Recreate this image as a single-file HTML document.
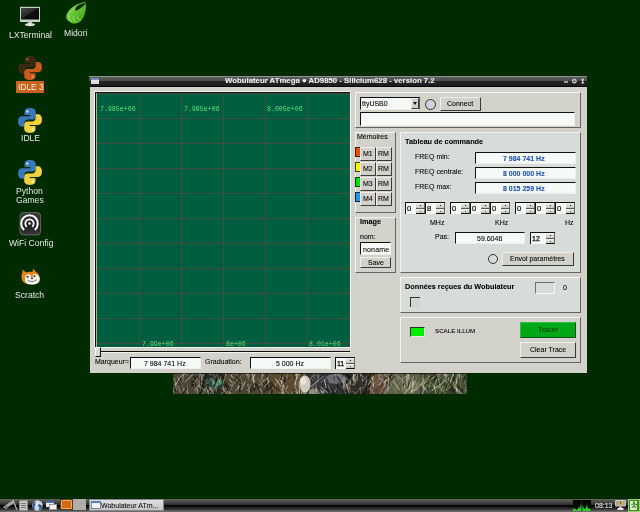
<!DOCTYPE html>
<html><head><meta charset="utf-8">
<style>
*{margin:0;padding:0;box-sizing:border-box}
html,body{width:640px;height:512px;overflow:hidden;background:#002a00;font-family:"Liberation Sans",sans-serif}
.a{position:absolute}
.t{position:absolute;white-space:pre;line-height:1;font-size:7px;color:#000;will-change:transform;-webkit-text-stroke-width:0.08px}
.b{font-weight:bold}
.fr{position:absolute;border-top:1px solid #f2f4f0;border-left:1px solid #f2f4f0;border-right:1px solid #62625e;border-bottom:1px solid #62625e}
.ent{position:absolute;background:#f6faf6;border-top:1px solid #111;border-left:1px solid #111;border-right:1px solid #eef0ee;border-bottom:1px solid #eef0ee}
.btn{position:absolute;background:#d2d2ca;border-top:1px solid #eeeee8;border-left:1px solid #eeeee8;border-right:1px solid #3a3a38;border-bottom:1px solid #3a3a38}
.dl{color:#e4e8e4;font-size:8.6px;-webkit-text-stroke-width:0}
.gl{position:absolute;background:#584a3c;opacity:0.75}
.cl{will-change:transform;position:absolute;white-space:pre;line-height:1;font-size:6.6px;font-family:"Liberation Mono",monospace;color:#58e07a}
.sp{position:absolute;width:20px;height:12px;background:#f6faf6;border-top:1px solid #111;border-left:1px solid #111}
.sb{position:absolute;right:0;width:9px;height:6px;background:linear-gradient(#f4f4f0,#c4c4bc);border-right:1px solid #6a6a66;border-bottom:1px solid #5a5a56}
.sb i{position:absolute;left:4px;top:2px;width:1px;height:1px;background:#111}
</style></head><body>

<!-- desktop icons -->
<svg class="a" style="left:19px;top:6px" width="22" height="21" viewBox="0 0 22 21">
<defs><linearGradient id="lg" x1="0" y1="0" x2="1" y2="1"><stop offset="0" stop-color="#4a4a4a"/><stop offset="0.45" stop-color="#2a2a2a"/><stop offset="0.5" stop-color="#101010"/><stop offset="1" stop-color="#060606"/></linearGradient></defs>
<rect x="1" y="0.8" width="20" height="15.2" fill="#c8d0c8"/>
<rect x="2" y="2" width="18" height="11.5" fill="url(#lg)"/>
<rect x="9" y="16" width="4" height="2" fill="#b8c0b8"/>
<ellipse cx="11" cy="18.6" rx="5" ry="1.7" fill="#d8e0d8"/>
</svg>
<svg class="a" style="left:62px;top:0px" width="28" height="26" viewBox="0 0 28 26">
<defs><linearGradient id="mg" x1="0" y1="0" x2="1" y2="1"><stop offset="0" stop-color="#a8e878"/><stop offset="0.5" stop-color="#62c030"/><stop offset="1" stop-color="#3a9a18"/></linearGradient></defs>
<path d="M23,2 C17,3 10,6 6,12 C3,16 4,20 8,22 C10,24 13,24 15,23 C17,23 19,21 21,18 C23,15 24,10 24,5 Z" fill="url(#mg)"/>
<path d="M23,4.5 C19.5,7.5 16.5,10 13.5,10.8 C12.5,9 14,6.5 17,4.8 C19,3.8 21,3.3 23,3 Z" fill="#002a00"/>
<path d="M7.5,15 C6.5,18 7.5,20.5 10,21.5 M11.5,16 C11,19 12,21.5 14.5,22 M15.5,16.5 C15.5,19 17,20.5 19,19.5" fill="none" stroke="#a8f078" stroke-width="0.9" opacity="0.8"/>
</svg>
<svg class="a" style="left:18px;top:56px" width="24" height="24" viewBox="0 0 24 24" preserveAspectRatio="none"><path d="M12,0 C7.5,0 6.5,2 6.5,4 L6.5,6.8 L12.3,6.8 L12.3,7.8 L4,7.8 C1.5,7.8 0,9.8 0,12.8 C0,16.2 1.5,18 4,18 L6.3,18 L6.3,14.6 C6.3,12.6 8,11 10,11 L14.6,11 C16.6,11 17.8,9.8 17.8,7.8 L17.8,4 C17.8,2 16.2,0 12,0 Z" fill="#3a2a14"/><path d="M12,24 C16.5,24 17.5,22 17.5,20 L17.5,17.2 L11.7,17.2 L11.7,16.2 L20,16.2 C22.5,16.2 24,14.2 24,11.2 C24,7.8 22.5,6 20,6 L17.7,6 L17.7,9.4 C17.7,11.4 16,13 14,13 L9.4,13 C7.4,13 6.2,14.2 6.2,16.2 L6.2,20 C6.2,22 7.8,24 12,24 Z" fill="#c85a1e"/><circle cx="9.3" cy="3.3" r="1.2" fill="#7a6040"/><circle cx="14.7" cy="20.7" r="1.2" fill="#e89050"/></svg>
<div class="a" style="left:16px;top:81px;width:28px;height:12px;background:#c8641e"></div><div class="t" style="left:17.5px;top:82.5px;font-size:8.6px;color:#f4e8d8;-webkit-text-stroke-width:0;letter-spacing:-0.1px">IDLE 3</div>
<svg class="a" style="left:18px;top:108px" width="24" height="25" viewBox="0 0 24 24" preserveAspectRatio="none"><path d="M12,0 C7.5,0 6.5,2 6.5,4 L6.5,6.8 L12.3,6.8 L12.3,7.8 L4,7.8 C1.5,7.8 0,9.8 0,12.8 C0,16.2 1.5,18 4,18 L6.3,18 L6.3,14.6 C6.3,12.6 8,11 10,11 L14.6,11 C16.6,11 17.8,9.8 17.8,7.8 L17.8,4 C17.8,2 16.2,0 12,0 Z" fill="#3a78b8"/><path d="M12,24 C16.5,24 17.5,22 17.5,20 L17.5,17.2 L11.7,17.2 L11.7,16.2 L20,16.2 C22.5,16.2 24,14.2 24,11.2 C24,7.8 22.5,6 20,6 L17.7,6 L17.7,9.4 C17.7,11.4 16,13 14,13 L9.4,13 C7.4,13 6.2,14.2 6.2,16.2 L6.2,20 C6.2,22 7.8,24 12,24 Z" fill="#f2d040"/><circle cx="9.3" cy="3.3" r="1.2" fill="#cfe0f0"/><circle cx="14.7" cy="20.7" r="1.2" fill="#fff8d0"/></svg>
<svg class="a" style="left:18px;top:160px" width="24" height="25" viewBox="0 0 24 24" preserveAspectRatio="none"><path d="M12,0 C7.5,0 6.5,2 6.5,4 L6.5,6.8 L12.3,6.8 L12.3,7.8 L4,7.8 C1.5,7.8 0,9.8 0,12.8 C0,16.2 1.5,18 4,18 L6.3,18 L6.3,14.6 C6.3,12.6 8,11 10,11 L14.6,11 C16.6,11 17.8,9.8 17.8,7.8 L17.8,4 C17.8,2 16.2,0 12,0 Z" fill="#3a78b8"/><path d="M12,24 C16.5,24 17.5,22 17.5,20 L17.5,17.2 L11.7,17.2 L11.7,16.2 L20,16.2 C22.5,16.2 24,14.2 24,11.2 C24,7.8 22.5,6 20,6 L17.7,6 L17.7,9.4 C17.7,11.4 16,13 14,13 L9.4,13 C7.4,13 6.2,14.2 6.2,16.2 L6.2,20 C6.2,22 7.8,24 12,24 Z" fill="#f2d040"/><circle cx="9.3" cy="3.3" r="1.2" fill="#cfe0f0"/><circle cx="14.7" cy="20.7" r="1.2" fill="#fff8d0"/></svg>
<svg class="a" style="left:19px;top:212px" width="23" height="24" viewBox="0 0 23 24">
<defs><linearGradient id="wg" x1="0" y1="0" x2="0" y2="1"><stop offset="0" stop-color="#3a3a3a"/><stop offset="0.6" stop-color="#1e1e1e"/><stop offset="1" stop-color="#3a3a3a"/></linearGradient></defs>
<rect x="1" y="0.6" width="20.6" height="22.4" rx="3.5" fill="url(#wg)" stroke="#7a7e7a" stroke-width="0.7"/>
<path d="M5.17,17.86 A8.3,8.3 0 1 1 15.83,17.86" fill="none" stroke="#f6f6f6" stroke-width="2.1"/>
<path d="M7.8,14.72 A4.2,4.2 0 1 1 13.2,14.72" fill="none" stroke="#f6f6f6" stroke-width="1.8"/>
<circle cx="10.5" cy="11.5" r="1.3" fill="#f6f6f6"/>
</svg>
<svg class="a" style="left:21px;top:268px" width="20" height="17" viewBox="0 0 20 17">
<path d="M1.5,1.5 L5,4.5 C7,3.5 10,3.5 11.5,4 L12,0.5 L15,4 C17,5 18.5,7 19,10 C19.5,13 17,16 12,16.5 C8,17 3,16 1,12 C0,9 0.5,6 1.5,4 Z" fill="#e8841c"/>
<path d="M4.5,8 C6,6 8,6 9.5,7 C11,6 14,5.5 16.5,7 C19,9 19.3,12.5 17.5,14.5 C15,16.8 10,17 6.5,15.8 C4,14.8 3.5,11 4.5,8 Z" fill="#f6f6f2"/>
<path d="M9,4 L12.5,4 L11.5,9.5 L10,9.5 Z" fill="#e8841c"/>
<circle cx="6.6" cy="8.8" r="1" fill="#222"/><circle cx="13.5" cy="8.3" r="1" fill="#222"/>
<ellipse cx="11" cy="10.3" rx="1.2" ry="0.9" fill="#6a2a10"/>
<path d="M6.5,12 Q11,15.5 16,11.5" fill="none" stroke="#556" stroke-width="0.8"/>
</svg>
<!-- desktop icon labels -->
<div class="t dl" style="left:9px;top:31px">LXTerminal</div>
<div class="t dl" style="left:64px;top:28.5px">Midori</div>
<div class="t dl" style="left:21px;top:133.5px">IDLE</div>
<div class="t dl" style="left:16px;top:186.5px">Python</div>
<div class="t dl" style="left:16px;top:195.5px">Games</div>
<div class="t dl" style="left:9px;top:239px">WiFi Config</div>
<div class="t dl" style="left:14.5px;top:290.5px">Scratch</div>

<!-- window frame -->
<div class="a" style="left:90px;top:76px;width:497px;height:297px;background:#d2d2ca"></div>
<div class="a" style="left:89px;top:76px;width:498px;height:11px;background:linear-gradient(#8e928e 0,#8e928e 1px,#5c5e5c 1px,#4a4c4a 5px,#242424 5px,#1e1e1e 10px,#000 10px)"></div>
<div class="a" style="left:91px;top:78px;width:8px;height:6px;background:linear-gradient(#5a78a8 0,#8aa0c4 2px,#e0e4e8 2px,#d4d8dc 6px)"></div>
<div class="t b" style="left:225px;top:77px;font-size:7.8px;color:#f0f0f0">Wobulateur ATmega ● AD9850 - Silicium628 - version 7.2</div>
<svg class="a" style="left:563px;top:78px" width="23" height="7" viewBox="0 0 23 7"><rect x="1" y="3" width="4" height="2" fill="#9a9a9a"/><circle cx="11.3" cy="3.2" r="2.4" fill="#c4c4c4"/><rect x="10" y="2.7" width="2.6" height="1.1" fill="#303030"/><path d="M18.2,0.8 L21.2,0.8 L20.2,3.2 L21.2,5.6 L18.2,5.6 L19.2,3.2 Z" fill="#d8d8d8"/></svg>

<!-- canvas -->
<div class="a" style="left:94px;top:91px;width:257px;height:257px;background:#eef2ee;border-top:1px solid #f0f2ee;border-left:1px solid #f0f2ee"></div>
<div class="a" style="left:95px;top:92px;width:255px;height:255px;background:#005e40;border-top:1px solid #101010;border-left:1px solid #101010;overflow:hidden">
</div>
<div class="gl" style="left:139px;top:93px;width:1px;height:254px"></div>
<div class="gl" style="left:181px;top:93px;width:1px;height:254px"></div>
<div class="gl" style="left:223px;top:93px;width:1px;height:254px"></div>
<div class="gl" style="left:265px;top:93px;width:1px;height:254px"></div>
<div class="gl" style="left:307px;top:93px;width:1px;height:254px"></div>
<div class="gl" style="left:349px;top:93px;width:1px;height:254px"></div>
<div class="gl" style="left:96px;top:93px;width:254px;height:1px"></div>
<div class="gl" style="left:96px;top:118px;width:254px;height:1px"></div>
<div class="gl" style="left:96px;top:143px;width:254px;height:1px"></div>
<div class="gl" style="left:96px;top:168px;width:254px;height:1px"></div>
<div class="gl" style="left:96px;top:193px;width:254px;height:1px"></div>
<div class="gl" style="left:96px;top:218px;width:254px;height:1px"></div>
<div class="gl" style="left:96px;top:243px;width:254px;height:1px"></div>
<div class="gl" style="left:96px;top:268px;width:254px;height:1px"></div>
<div class="gl" style="left:96px;top:293px;width:254px;height:1px"></div>
<div class="gl" style="left:96px;top:318px;width:254px;height:1px"></div>
<div class="gl" style="left:96px;top:343px;width:254px;height:1px"></div>
<div class="a" style="left:96px;top:93px;width:1px;height:254px;background:#a8b880"></div>
<div class="cl" style="left:100px;top:106.5px">7.985e+06</div>
<div class="cl" style="left:184px;top:106.5px">7.995e+06</div>
<div class="cl" style="left:267px;top:106.5px">8.005e+06</div>
<div class="a" style="left:96px;top:336px;width:254px;height:10px;overflow:hidden"><div class="cl" style="left:46px;top:6px">7.99e+06</div><div class="cl" style="left:130px;top:6px">8e+06</div><div class="cl" style="left:213px;top:6px">8.01e+06</div></div>

<!-- slider -->
<div class="a" style="left:100px;top:351px;width:250px;height:1px;background:#111"></div><div class="a" style="left:100px;top:352px;width:250px;height:1px;background:#f2f2ec"></div>
<div class="a" style="left:95px;top:347px;width:6px;height:10px;background:#d6d8d4;border-top:1px solid #fafafa;border-left:1px solid #fafafa;border-right:1px solid #111;border-bottom:1px solid #111"></div>

<!-- bottom row -->
<div class="t" style="left:95px;top:358px">Marqueur=</div>
<div class="ent" style="left:130px;top:357px;width:71px;height:12px"></div>
<div class="t" style="left:144px;top:359.5px">7 984 741 Hz</div>
<div class="t" style="left:205px;top:358px">Graduation:</div>
<div class="ent" style="left:250px;top:357px;width:81px;height:12px"></div>
<div class="t" style="left:276px;top:359.5px">5 000 Hz</div>
<div class="sp" style="left:335px;top:357px;width:20px;height:12px"><div class="sb" style="top:0"><i></i></div><div class="sb" style="top:6px;height:5px;border-bottom-color:#111"><i style="top:2px;background:#555"></i></div></div>
<div class="t" style="left:337px;top:359.5px;-webkit-text-stroke-width:0.25px">11</div>

<!-- frame connect -->
<div class="fr" style="left:355px;top:92px;width:226px;height:36px"></div>
<div class="ent" style="left:360px;top:97px;width:60px;height:13px;border-right:1px solid #555;border-bottom:1px solid #e8ece8"></div>
<div class="t" style="left:362px;top:99.5px">ttyUSB0</div>
<div class="btn" style="left:411px;top:98px;width:8px;height:11px"></div>
<div class="a" style="left:413px;top:102px;width:0;height:0;border-left:2px solid transparent;border-right:2px solid transparent;border-top:3px solid #111"></div>
<div class="a" style="left:425px;top:99px;width:11px;height:11px;border:1px solid #333;border-radius:50%;background:#d0d2d8"></div>
<div class="btn" style="left:440px;top:97px;width:41px;height:14px"></div>
<div class="t" style="left:447px;top:100px">Connect</div>
<div class="ent" style="left:360px;top:112px;width:215px;height:14px"></div>

<!-- frame memoires -->
<div class="fr" style="left:355px;top:132px;width:41px;height:81px"></div>
<div class="t" style="left:357px;top:133px">Mémoires</div>
<div class="a" style="left:355px;top:147px;width:6px;height:10px;background:#f05010;border:1px solid #402010"></div>
<div class="a" style="left:355px;top:162px;width:6px;height:10px;background:#f8f800;border:1px solid #404010"></div>
<div class="a" style="left:355px;top:177px;width:6px;height:10px;background:#00e000;border:1px solid #104010"></div>
<div class="a" style="left:355px;top:192px;width:6px;height:10px;background:#2098f0;border:1px solid #102040"></div>
<div class="btn" style="left:360px;top:147px;width:16px;height:14px"></div><div class="t" style="left:363px;top:150px">M1</div>
<div class="btn" style="left:376px;top:147px;width:16px;height:14px"></div><div class="t" style="left:378px;top:150px">RM</div>
<div class="btn" style="left:360px;top:162px;width:16px;height:14px"></div><div class="t" style="left:363px;top:165px">M2</div>
<div class="btn" style="left:376px;top:162px;width:16px;height:14px"></div><div class="t" style="left:378px;top:165px">RM</div>
<div class="btn" style="left:360px;top:177px;width:16px;height:14px"></div><div class="t" style="left:363px;top:180px">M3</div>
<div class="btn" style="left:376px;top:177px;width:16px;height:14px"></div><div class="t" style="left:378px;top:180px">RM</div>
<div class="btn" style="left:360px;top:192px;width:16px;height:14px"></div><div class="t" style="left:363px;top:195px">M4</div>
<div class="btn" style="left:376px;top:192px;width:16px;height:14px"></div><div class="t" style="left:378px;top:195px">RM</div>

<!-- frame image -->
<div class="fr" style="left:355px;top:217px;width:41px;height:56px"></div>
<div class="t b" style="left:360px;top:218px;font-size:7.3px">Image</div>
<div class="t" style="left:360px;top:233.2px">nom:</div>
<div class="ent" style="left:360px;top:242px;width:31px;height:13px"></div>
<div class="t" style="left:362.5px;top:245.5px;letter-spacing:0.15px">noname</div>
<div class="btn" style="left:360px;top:257px;width:31px;height:11px"></div>
<div class="t" style="left:368px;top:258.5px">Save</div>

<!-- frame tableau -->
<div class="fr" style="left:400px;top:132px;width:181px;height:141px;background:#d8dcd8"></div>
<div class="t b" style="left:405px;top:138px;font-size:7.3px">Tableau de commande</div>
<div class="t" style="left:415px;top:153px">FREQ min:</div>
<div class="t" style="left:415px;top:168px">FREQ centrale:</div>
<div class="t" style="left:415px;top:183px">FREQ max:</div>
<div class="ent" style="left:475px;top:152px;width:101px;height:12px"></div>
<div class="ent" style="left:475px;top:167px;width:101px;height:12px"></div>
<div class="ent" style="left:475px;top:182px;width:101px;height:12px"></div>
<div class="t b" style="left:503px;top:155px;color:#1c50b4">7 984 741 Hz</div>
<div class="t b" style="left:503px;top:170px;color:#1c50b4">8 000 000 Hz</div>
<div class="t b" style="left:503px;top:185px;color:#1c50b4">8 015 259 Hz</div>
<div class="sp" style="left:405px;top:202px"><div class="sb" style="top:0"><i></i></div><div class="sb" style="top:6px;height:5px;border-bottom-color:#111"><i style="top:2px;background:#555"></i></div></div>
<div class="sp" style="left:425px;top:202px"><div class="sb" style="top:0"><i></i></div><div class="sb" style="top:6px;height:5px;border-bottom-color:#111"><i style="top:2px;background:#555"></i></div></div>
<div class="sp" style="left:450px;top:202px"><div class="sb" style="top:0"><i></i></div><div class="sb" style="top:6px;height:5px;border-bottom-color:#111"><i style="top:2px;background:#555"></i></div></div>
<div class="sp" style="left:470px;top:202px"><div class="sb" style="top:0"><i></i></div><div class="sb" style="top:6px;height:5px;border-bottom-color:#111"><i style="top:2px;background:#555"></i></div></div>
<div class="sp" style="left:490px;top:202px"><div class="sb" style="top:0"><i></i></div><div class="sb" style="top:6px;height:5px;border-bottom-color:#111"><i style="top:2px;background:#555"></i></div></div>
<div class="sp" style="left:515px;top:202px"><div class="sb" style="top:0"><i></i></div><div class="sb" style="top:6px;height:5px;border-bottom-color:#111"><i style="top:2px;background:#555"></i></div></div>
<div class="sp" style="left:535px;top:202px"><div class="sb" style="top:0"><i></i></div><div class="sb" style="top:6px;height:5px;border-bottom-color:#111"><i style="top:2px;background:#555"></i></div></div>
<div class="sp" style="left:555px;top:202px"><div class="sb" style="top:0"><i></i></div><div class="sb" style="top:6px;height:5px;border-bottom-color:#111"><i style="top:2px;background:#555"></i></div></div>
<div class="t" style="left:407px;top:204.6px;font-size:7.6px;-webkit-text-stroke-width:0.2px">0</div>
<div class="t" style="left:427px;top:204.6px;font-size:7.6px;-webkit-text-stroke-width:0.2px">8</div>
<div class="t" style="left:452px;top:204.6px;font-size:7.6px;-webkit-text-stroke-width:0.2px">0</div>
<div class="t" style="left:472px;top:204.6px;font-size:7.6px;-webkit-text-stroke-width:0.2px">0</div>
<div class="t" style="left:492px;top:204.6px;font-size:7.6px;-webkit-text-stroke-width:0.2px">0</div>
<div class="t" style="left:517px;top:204.6px;font-size:7.6px;-webkit-text-stroke-width:0.2px">0</div>
<div class="t" style="left:537px;top:204.6px;font-size:7.6px;-webkit-text-stroke-width:0.2px">0</div>
<div class="t" style="left:557px;top:204.6px;font-size:7.6px;-webkit-text-stroke-width:0.2px">0</div>
<div class="t" style="left:430px;top:219px">MHz</div>
<div class="t" style="left:495px;top:219px">KHz</div>
<div class="t" style="left:565px;top:219px">Hz</div>
<div class="t" style="left:435px;top:233px">Pas:</div>
<div class="ent" style="left:455px;top:232px;width:70px;height:12px"></div>
<div class="t" style="left:477px;top:235px">59.6046</div>
<div class="sp" style="left:530px;top:232px;width:25px;height:12px"><div class="sb" style="top:0"><i></i></div><div class="sb" style="top:6px;height:5px;border-bottom-color:#111"><i style="top:2px;background:#555"></i></div></div>
<div class="t" style="left:532px;top:235px;-webkit-text-stroke-width:0.25px">12</div>
<div class="a" style="left:488px;top:254px;width:10px;height:10px;border:1px solid #333;border-radius:50%"></div>
<div class="btn" style="left:502px;top:252px;width:72px;height:14px"></div>
<div class="t" style="left:510px;top:255px">Envoi paramètres</div>

<!-- frame donnees -->
<div class="fr" style="left:400px;top:277px;width:181px;height:36px;background:#d8dcd8"></div>
<div class="t b" style="left:405px;top:283px;font-size:7.3px">Données reçues du Wobulateur</div>
<div class="a" style="left:410px;top:297px;width:10px;height:10px;background:#d2d4d2;border-top:1px solid #333;border-left:1px solid #333"></div>
<div class="a" style="left:535px;top:282px;width:20px;height:12px;border-top:1px solid #707070;border-left:1px solid #707070;border-right:1px solid #f8f8f8;border-bottom:1px solid #f8f8f8"></div>
<div class="t" style="left:563px;top:284px">0</div>

<!-- frame trace -->
<div class="fr" style="left:400px;top:317px;width:181px;height:46px"></div>
<div class="a" style="left:410px;top:327px;width:15px;height:10px;background:#00ee00;border-top:1px solid #1a3a1a;border-left:1px solid #1a3a1a;border-right:1px solid #e0f0e0;border-bottom:1px solid #e0f0e0"></div>
<div class="t" style="left:435px;top:328px;font-size:6.2px">SCALE ILLUM</div>
<div class="a" style="left:520px;top:322px;width:56px;height:16px;background:#00a818;border-top:1px solid #30c040;border-left:1px solid #30c040;border-right:1px solid #105010;border-bottom:1px solid #105010"></div>
<div class="t" style="left:538px;top:326px;color:#0a3a0a">Tracer</div>
<div class="btn" style="left:520px;top:342px;width:56px;height:16px"></div>
<div class="t" style="left:530px;top:346px">Clear Trace</div>

<!-- photo strip -->
<svg class="a" style="left:173px;top:373px" width="294" height="21" viewBox="0 0 294 21"><rect width="294" height="21" fill="#3a3526"/><rect x="0" y="0" width="27" height="21" fill="#4a4636"/><rect x="27" y="0" width="25" height="21" fill="#2a2c24"/><rect x="52" y="0" width="45" height="21" fill="#4e4634"/><rect x="97" y="0" width="30" height="21" fill="#5a4a30"/><rect x="137" y="0" width="35" height="21" fill="#34363c"/><rect x="172" y="0" width="25" height="21" fill="#302e28"/><rect x="197" y="0" width="15" height="21" fill="#5a4636"/><rect x="212" y="0" width="35" height="21" fill="#5e5c4a"/><rect x="247" y="0" width="47" height="21" fill="#3c4232"/><ellipse cx="40" cy="10" rx="9" ry="6" fill="#24443a"/><ellipse cx="44" cy="9" rx="5" ry="3.5" fill="#4a8a70"/><ellipse cx="163" cy="6" rx="11" ry="5" fill="#6a6a72"/><ellipse cx="206" cy="7" rx="10" ry="6" fill="#6a5444"/><ellipse cx="140" cy="19" rx="12" ry="3" fill="#8a8a88"/><line x1="45.1" y1="23.1" x2="51.7" y2="18.1" stroke="#c8c8c0" stroke-width="0.92" opacity="0.63"/><line x1="50.8" y1="18.0" x2="50.2" y2="12.9" stroke="#e0d8c0" stroke-width="0.97" opacity="0.51"/><line x1="275.1" y1="7.9" x2="275.9" y2="4.0" stroke="#b0a080" stroke-width="0.87" opacity="0.95"/><line x1="146.3" y1="0.5" x2="138.6" y2="-7.2" stroke="#1a160e" stroke-width="1.54" opacity="0.51"/><line x1="44.0" y1="5.6" x2="35.0" y2="-1.9" stroke="#b0a080" stroke-width="0.59" opacity="0.72"/><line x1="232.2" y1="2.9" x2="233.6" y2="-7.6" stroke="#242018" stroke-width="1.56" opacity="0.80"/><line x1="139.8" y1="22.9" x2="140.2" y2="16.2" stroke="#c8c0a0" stroke-width="0.57" opacity="0.65"/><line x1="147.4" y1="23.8" x2="140.4" y2="16.6" stroke="#1a160e" stroke-width="0.83" opacity="0.65"/><line x1="145.8" y1="23.5" x2="146.6" y2="16.8" stroke="#a09070" stroke-width="0.76" opacity="0.77"/><line x1="29.3" y1="7.4" x2="26.9" y2="-1.3" stroke="#c8c8c0" stroke-width="0.96" opacity="0.66"/><line x1="26.4" y1="21.6" x2="29.4" y2="12.5" stroke="#0e0c08" stroke-width="1.17" opacity="0.81"/><line x1="286.3" y1="5.9" x2="286.2" y2="-1.8" stroke="#c8c0a0" stroke-width="0.80" opacity="0.93"/><line x1="261.3" y1="6.9" x2="263.0" y2="3.3" stroke="#0e0c08" stroke-width="1.21" opacity="0.68"/><line x1="254.4" y1="3.6" x2="255.6" y2="-1.1" stroke="#4a8038" stroke-width="0.59" opacity="0.69"/><line x1="216.5" y1="5.1" x2="218.0" y2="1.7" stroke="#0e0c08" stroke-width="1.33" opacity="0.88"/><line x1="249.8" y1="12.8" x2="253.6" y2="7.9" stroke="#f0e8d8" stroke-width="0.71" opacity="0.77"/><line x1="78.9" y1="7.8" x2="81.1" y2="2.4" stroke="#e0d8c0" stroke-width="0.56" opacity="0.67"/><line x1="70.9" y1="3.2" x2="80.2" y2="-4.6" stroke="#b0a080" stroke-width="0.70" opacity="0.62"/><line x1="23.8" y1="6.8" x2="20.4" y2="3.5" stroke="#0e0c08" stroke-width="1.59" opacity="0.76"/><line x1="87.4" y1="9.1" x2="84.4" y2="4.9" stroke="#b0a080" stroke-width="0.61" opacity="0.72"/><line x1="210.8" y1="22.3" x2="212.6" y2="18.7" stroke="#e0d8c0" stroke-width="0.75" opacity="0.77"/><line x1="112.8" y1="16.7" x2="115.0" y2="11.4" stroke="#b0a080" stroke-width="0.59" opacity="0.84"/><line x1="90.3" y1="19.3" x2="99.5" y2="12.4" stroke="#1a160e" stroke-width="1.53" opacity="0.56"/><line x1="144.0" y1="7.4" x2="148.9" y2="-3.4" stroke="#a09070" stroke-width="0.75" opacity="0.77"/><line x1="207.6" y1="1.6" x2="206.0" y2="-3.5" stroke="#a09070" stroke-width="0.81" opacity="0.59"/><line x1="195.0" y1="12.1" x2="201.5" y2="2.1" stroke="#e0d8c0" stroke-width="0.81" opacity="0.79"/><line x1="282.9" y1="15.9" x2="280.1" y2="13.2" stroke="#4a8038" stroke-width="0.76" opacity="0.70"/><line x1="7.8" y1="9.2" x2="7.3" y2="3.1" stroke="#242018" stroke-width="1.52" opacity="0.83"/><line x1="143.0" y1="21.4" x2="142.8" y2="10.3" stroke="#c8c8c0" stroke-width="0.74" opacity="0.54"/><line x1="232.0" y1="22.0" x2="233.8" y2="16.6" stroke="#a09070" stroke-width="0.93" opacity="0.80"/><line x1="112.3" y1="7.5" x2="106.9" y2="3.5" stroke="#a09070" stroke-width="0.99" opacity="0.93"/><line x1="113.9" y1="17.8" x2="115.4" y2="10.9" stroke="#242018" stroke-width="1.32" opacity="0.57"/><line x1="293.8" y1="2.0" x2="294.6" y2="-3.5" stroke="#98c068" stroke-width="0.60" opacity="0.82"/><line x1="3.7" y1="17.2" x2="-0.7" y2="8.8" stroke="#c8c0a0" stroke-width="0.75" opacity="0.90"/><line x1="42.8" y1="9.2" x2="40.8" y2="4.6" stroke="#b0a080" stroke-width="0.81" opacity="0.70"/><line x1="77.8" y1="0.5" x2="85.2" y2="-6.4" stroke="#0e0c08" stroke-width="1.61" opacity="0.51"/><line x1="147.4" y1="3.5" x2="157.5" y2="-4.1" stroke="#242018" stroke-width="1.25" opacity="0.68"/><line x1="290.7" y1="19.7" x2="284.0" y2="11.6" stroke="#1a160e" stroke-width="1.17" opacity="0.86"/><line x1="155.9" y1="19.8" x2="152.1" y2="12.2" stroke="#0e0c08" stroke-width="1.68" opacity="0.67"/><line x1="172.7" y1="23.7" x2="171.5" y2="12.1" stroke="#e0d8c0" stroke-width="0.54" opacity="0.80"/><line x1="195.1" y1="19.2" x2="196.7" y2="11.4" stroke="#1a160e" stroke-width="1.41" opacity="0.83"/><line x1="97.8" y1="16.0" x2="88.6" y2="9.2" stroke="#1a160e" stroke-width="1.44" opacity="0.62"/><line x1="51.6" y1="6.6" x2="46.5" y2="-0.3" stroke="#0e0c08" stroke-width="1.15" opacity="0.64"/><line x1="234.9" y1="17.5" x2="233.4" y2="7.4" stroke="#e0d8c0" stroke-width="0.97" opacity="0.55"/><line x1="154.5" y1="15.1" x2="152.4" y2="7.0" stroke="#0e0c08" stroke-width="0.84" opacity="0.59"/><line x1="47.9" y1="6.7" x2="47.5" y2="2.7" stroke="#b0a080" stroke-width="0.93" opacity="0.72"/><line x1="11.9" y1="9.4" x2="20.5" y2="0.6" stroke="#c8c8c0" stroke-width="0.77" opacity="0.91"/><line x1="281.3" y1="15.5" x2="283.2" y2="5.1" stroke="#f0e8d8" stroke-width="0.68" opacity="0.51"/><line x1="44.1" y1="6.9" x2="40.2" y2="-0.1" stroke="#a09070" stroke-width="0.71" opacity="0.73"/><line x1="131.8" y1="16.1" x2="132.9" y2="9.3" stroke="#f0e8d8" stroke-width="0.62" opacity="0.91"/><line x1="258.4" y1="17.8" x2="266.9" y2="11.3" stroke="#e0d8c0" stroke-width="0.98" opacity="0.91"/><line x1="59.7" y1="10.2" x2="55.9" y2="5.9" stroke="#f0e8d8" stroke-width="0.76" opacity="0.90"/><line x1="189.8" y1="11.7" x2="189.0" y2="4.4" stroke="#c8c0a0" stroke-width="0.63" opacity="0.79"/><line x1="75.7" y1="7.2" x2="73.6" y2="0.1" stroke="#b0a080" stroke-width="0.89" opacity="0.59"/><line x1="37.4" y1="14.0" x2="29.2" y2="8.0" stroke="#0e0c08" stroke-width="1.19" opacity="0.65"/><line x1="170.2" y1="16.1" x2="171.2" y2="5.0" stroke="#c8c0a0" stroke-width="0.93" opacity="0.72"/><line x1="3.2" y1="14.4" x2="1.5" y2="5.1" stroke="#c8c0a0" stroke-width="0.73" opacity="0.72"/><line x1="205.7" y1="22.3" x2="210.9" y2="13.3" stroke="#e0d8c0" stroke-width="0.63" opacity="0.67"/><line x1="55.4" y1="22.4" x2="48.9" y2="14.7" stroke="#e0d8c0" stroke-width="0.62" opacity="0.84"/><line x1="26.7" y1="5.2" x2="26.6" y2="-5.9" stroke="#c8c8c0" stroke-width="0.60" opacity="0.60"/><line x1="203.7" y1="6.3" x2="207.3" y2="1.5" stroke="#242018" stroke-width="0.81" opacity="0.71"/><line x1="245.8" y1="10.7" x2="249.2" y2="2.7" stroke="#242018" stroke-width="0.82" opacity="0.76"/><line x1="147.2" y1="9.6" x2="151.0" y2="6.4" stroke="#f0e8d8" stroke-width="0.51" opacity="0.69"/><line x1="129.9" y1="15.4" x2="131.8" y2="12.3" stroke="#c8c8c0" stroke-width="0.61" opacity="0.73"/><line x1="133.3" y1="0.3" x2="132.0" y2="-4.5" stroke="#242018" stroke-width="1.55" opacity="0.86"/><line x1="77.4" y1="15.0" x2="74.8" y2="11.0" stroke="#f0e8d8" stroke-width="0.52" opacity="0.60"/><line x1="252.6" y1="16.8" x2="249.5" y2="13.3" stroke="#e0d8c0" stroke-width="0.82" opacity="0.58"/><line x1="58.3" y1="18.9" x2="55.0" y2="12.5" stroke="#0e0c08" stroke-width="1.37" opacity="0.59"/><line x1="277.3" y1="10.0" x2="281.0" y2="-0.7" stroke="#e0d8c0" stroke-width="0.98" opacity="0.68"/><line x1="170.4" y1="1.9" x2="163.9" y2="-7.6" stroke="#1a160e" stroke-width="1.38" opacity="0.81"/><line x1="288.3" y1="9.3" x2="290.9" y2="0.3" stroke="#4a8038" stroke-width="0.91" opacity="0.62"/><line x1="238.6" y1="17.3" x2="241.2" y2="13.4" stroke="#1a160e" stroke-width="1.29" opacity="0.73"/><line x1="89.8" y1="20.8" x2="86.6" y2="14.9" stroke="#f0e8d8" stroke-width="0.72" opacity="0.80"/><line x1="124.2" y1="1.1" x2="130.9" y2="-6.3" stroke="#c8c8c0" stroke-width="0.61" opacity="0.94"/><line x1="185.3" y1="0.8" x2="184.7" y2="-4.8" stroke="#b0a080" stroke-width="0.96" opacity="0.58"/><line x1="60.1" y1="6.0" x2="67.5" y2="-3.5" stroke="#f0e8d8" stroke-width="0.89" opacity="0.51"/><line x1="102.8" y1="11.5" x2="108.4" y2="3.8" stroke="#c8c0a0" stroke-width="0.80" opacity="0.63"/><line x1="94.9" y1="23.1" x2="99.4" y2="15.0" stroke="#c8c8c0" stroke-width="0.84" opacity="0.57"/><line x1="262.2" y1="15.0" x2="258.1" y2="9.4" stroke="#f0e8d8" stroke-width="0.69" opacity="0.65"/><line x1="78.0" y1="5.0" x2="75.5" y2="2.2" stroke="#242018" stroke-width="1.03" opacity="0.81"/><line x1="109.6" y1="10.3" x2="117.2" y2="4.1" stroke="#242018" stroke-width="1.31" opacity="0.78"/><line x1="196.9" y1="4.0" x2="200.7" y2="-5.4" stroke="#0e0c08" stroke-width="0.85" opacity="0.71"/><line x1="28.7" y1="10.7" x2="28.8" y2="3.8" stroke="#e0d8c0" stroke-width="0.56" opacity="0.79"/><line x1="211.4" y1="9.8" x2="210.0" y2="6.6" stroke="#b0a080" stroke-width="0.78" opacity="0.93"/><line x1="235.7" y1="8.3" x2="238.6" y2="4.6" stroke="#b0a080" stroke-width="0.66" opacity="0.78"/><line x1="279.6" y1="1.0" x2="272.5" y2="-8.6" stroke="#c8c8c0" stroke-width="0.55" opacity="0.57"/><line x1="234.9" y1="3.1" x2="236.7" y2="-2.2" stroke="#98c068" stroke-width="0.90" opacity="0.51"/><line x1="93.0" y1="6.1" x2="97.7" y2="1.7" stroke="#a09070" stroke-width="0.55" opacity="0.84"/><line x1="60.8" y1="7.3" x2="58.0" y2="1.7" stroke="#f0e8d8" stroke-width="0.86" opacity="0.84"/><line x1="126.7" y1="22.4" x2="126.1" y2="11.6" stroke="#e0d8c0" stroke-width="0.95" opacity="0.78"/><line x1="50.7" y1="17.2" x2="53.8" y2="14.1" stroke="#b0a080" stroke-width="0.94" opacity="0.94"/><line x1="142.9" y1="18.4" x2="143.6" y2="14.7" stroke="#c8c0a0" stroke-width="0.95" opacity="0.87"/><line x1="295.3" y1="23.6" x2="290.2" y2="18.4" stroke="#4a8038" stroke-width="0.81" opacity="0.79"/><line x1="257.5" y1="3.4" x2="253.4" y2="-7.5" stroke="#6a9848" stroke-width="0.59" opacity="0.84"/><line x1="274.2" y1="1.2" x2="268.7" y2="-5.0" stroke="#a09070" stroke-width="0.68" opacity="0.62"/><line x1="19.0" y1="13.2" x2="19.1" y2="6.9" stroke="#0e0c08" stroke-width="1.27" opacity="0.68"/><line x1="80.0" y1="18.1" x2="83.5" y2="10.7" stroke="#242018" stroke-width="1.42" opacity="0.63"/><line x1="187.4" y1="4.0" x2="188.2" y2="-9.1" stroke="#f0e8d8" stroke-width="0.59" opacity="0.59"/><line x1="281.9" y1="20.8" x2="279.4" y2="15.7" stroke="#1a160e" stroke-width="1.34" opacity="0.67"/><line x1="190.6" y1="4.1" x2="181.2" y2="-4.5" stroke="#e0d8c0" stroke-width="0.78" opacity="0.88"/><line x1="-1.6" y1="10.1" x2="-5.0" y2="3.7" stroke="#a09070" stroke-width="0.89" opacity="0.94"/><line x1="202.9" y1="23.2" x2="197.6" y2="15.1" stroke="#f0e8d8" stroke-width="0.59" opacity="0.78"/><line x1="122.0" y1="11.8" x2="124.5" y2="0.7" stroke="#c8c8c0" stroke-width="0.97" opacity="0.95"/><line x1="173.3" y1="12.3" x2="179.9" y2="6.8" stroke="#e0d8c0" stroke-width="0.63" opacity="0.80"/><line x1="75.2" y1="4.1" x2="78.3" y2="-7.2" stroke="#0e0c08" stroke-width="0.90" opacity="0.85"/><line x1="171.7" y1="20.4" x2="163.0" y2="11.7" stroke="#242018" stroke-width="1.47" opacity="0.79"/><line x1="141.2" y1="18.9" x2="139.9" y2="12.6" stroke="#a09070" stroke-width="0.98" opacity="0.58"/><line x1="293.4" y1="9.2" x2="287.1" y2="0.7" stroke="#242018" stroke-width="1.43" opacity="0.65"/><line x1="30.9" y1="2.8" x2="26.5" y2="-2.1" stroke="#c8c8c0" stroke-width="0.59" opacity="0.73"/><line x1="110.9" y1="22.0" x2="106.6" y2="12.3" stroke="#a09070" stroke-width="0.87" opacity="0.68"/><line x1="11.4" y1="20.2" x2="11.5" y2="15.4" stroke="#a09070" stroke-width="0.57" opacity="0.76"/><line x1="133.7" y1="9.9" x2="140.8" y2="1.9" stroke="#b0a080" stroke-width="0.88" opacity="0.87"/><line x1="190.9" y1="19.1" x2="190.6" y2="12.5" stroke="#242018" stroke-width="1.07" opacity="0.78"/><line x1="124.7" y1="21.7" x2="121.4" y2="10.1" stroke="#c8c8c0" stroke-width="0.69" opacity="0.85"/><line x1="52.7" y1="2.2" x2="51.5" y2="-10.8" stroke="#f0e8d8" stroke-width="0.64" opacity="0.84"/><line x1="78.3" y1="7.9" x2="84.5" y2="-2.3" stroke="#b0a080" stroke-width="0.73" opacity="0.93"/><line x1="64.2" y1="9.7" x2="59.1" y2="4.9" stroke="#0e0c08" stroke-width="1.55" opacity="0.57"/><line x1="161.8" y1="19.3" x2="163.9" y2="15.0" stroke="#b0a080" stroke-width="0.95" opacity="0.72"/><line x1="116.3" y1="0.4" x2="111.3" y2="-8.8" stroke="#b0a080" stroke-width="0.90" opacity="0.59"/><line x1="192.1" y1="22.3" x2="195.6" y2="14.6" stroke="#1a160e" stroke-width="1.40" opacity="0.74"/><line x1="80.5" y1="18.1" x2="82.3" y2="14.8" stroke="#242018" stroke-width="1.68" opacity="0.87"/><line x1="253.6" y1="0.5" x2="256.1" y2="-4.8" stroke="#b0a080" stroke-width="0.53" opacity="0.69"/><line x1="266.9" y1="17.0" x2="263.8" y2="7.8" stroke="#1a160e" stroke-width="1.39" opacity="0.72"/><line x1="271.7" y1="3.2" x2="268.3" y2="-6.1" stroke="#4a8038" stroke-width="0.84" opacity="0.87"/><line x1="176.6" y1="5.4" x2="171.3" y2="-1.7" stroke="#0e0c08" stroke-width="1.31" opacity="0.83"/><line x1="2.7" y1="11.4" x2="6.0" y2="5.8" stroke="#1a160e" stroke-width="1.58" opacity="0.78"/><line x1="233.3" y1="3.8" x2="234.9" y2="-1.5" stroke="#98c068" stroke-width="0.87" opacity="0.94"/><line x1="140.0" y1="23.5" x2="136.8" y2="21.2" stroke="#c8c8c0" stroke-width="0.79" opacity="0.68"/><line x1="280.7" y1="5.4" x2="283.1" y2="-3.9" stroke="#0e0c08" stroke-width="0.84" opacity="0.60"/><line x1="275.2" y1="15.5" x2="271.5" y2="12.3" stroke="#c8c0a0" stroke-width="0.68" opacity="0.59"/><line x1="80.9" y1="4.4" x2="75.4" y2="-4.6" stroke="#f0e8d8" stroke-width="0.69" opacity="0.63"/><line x1="252.7" y1="9.8" x2="254.7" y2="1.2" stroke="#4a8038" stroke-width="0.89" opacity="0.51"/><line x1="191.4" y1="11.1" x2="188.3" y2="8.4" stroke="#0e0c08" stroke-width="1.54" opacity="0.72"/><line x1="145.0" y1="5.5" x2="143.9" y2="-4.8" stroke="#a09070" stroke-width="0.98" opacity="0.57"/><line x1="156.2" y1="10.2" x2="165.7" y2="1.8" stroke="#a09070" stroke-width="0.74" opacity="0.52"/><line x1="75.7" y1="4.5" x2="72.0" y2="-5.7" stroke="#f0e8d8" stroke-width="0.63" opacity="0.90"/><line x1="94.9" y1="16.7" x2="97.6" y2="9.9" stroke="#c8c8c0" stroke-width="0.59" opacity="0.65"/><line x1="142.2" y1="20.6" x2="138.2" y2="12.8" stroke="#a09070" stroke-width="0.80" opacity="0.58"/><line x1="19.1" y1="13.2" x2="24.3" y2="3.6" stroke="#1a160e" stroke-width="1.61" opacity="0.85"/><line x1="297.3" y1="19.0" x2="301.8" y2="12.3" stroke="#f0e8d8" stroke-width="0.69" opacity="0.54"/><line x1="108.6" y1="7.3" x2="109.6" y2="3.8" stroke="#f0e8d8" stroke-width="0.51" opacity="0.77"/><line x1="29.9" y1="16.2" x2="25.3" y2="12.4" stroke="#c8c0a0" stroke-width="0.86" opacity="0.81"/><line x1="125.8" y1="1.9" x2="123.1" y2="-0.7" stroke="#c8c8c0" stroke-width="0.81" opacity="0.68"/><line x1="265.9" y1="15.6" x2="266.6" y2="10.7" stroke="#a09070" stroke-width="0.74" opacity="0.52"/><line x1="-4.4" y1="15.0" x2="-1.3" y2="9.6" stroke="#242018" stroke-width="1.14" opacity="0.76"/><line x1="185.5" y1="17.2" x2="183.8" y2="10.2" stroke="#a09070" stroke-width="0.59" opacity="0.54"/><line x1="73.9" y1="1.2" x2="69.5" y2="-2.5" stroke="#b0a080" stroke-width="0.97" opacity="0.69"/><line x1="87.6" y1="8.4" x2="90.4" y2="-2.1" stroke="#c8c8c0" stroke-width="0.54" opacity="0.71"/><line x1="211.6" y1="10.2" x2="208.8" y2="5.2" stroke="#e0d8c0" stroke-width="0.52" opacity="0.77"/><line x1="24.1" y1="20.8" x2="24.8" y2="12.8" stroke="#e0d8c0" stroke-width="0.58" opacity="0.88"/><line x1="214.6" y1="4.8" x2="210.0" y2="-0.1" stroke="#f0e8d8" stroke-width="0.72" opacity="0.66"/><line x1="217.3" y1="13.5" x2="212.4" y2="7.9" stroke="#242018" stroke-width="1.25" opacity="0.74"/><line x1="38.8" y1="21.5" x2="43.5" y2="13.8" stroke="#f0e8d8" stroke-width="0.54" opacity="0.53"/><line x1="236.6" y1="1.5" x2="234.2" y2="-6.0" stroke="#0e0c08" stroke-width="1.28" opacity="0.74"/><line x1="88.4" y1="13.2" x2="90.0" y2="7.4" stroke="#c8c0a0" stroke-width="0.71" opacity="0.69"/><line x1="54.2" y1="20.3" x2="56.7" y2="9.2" stroke="#a09070" stroke-width="0.58" opacity="0.70"/><line x1="21.2" y1="19.3" x2="29.9" y2="10.8" stroke="#b0a080" stroke-width="0.73" opacity="0.66"/><line x1="86.6" y1="15.4" x2="82.7" y2="11.3" stroke="#0e0c08" stroke-width="1.44" opacity="0.58"/><line x1="183.0" y1="12.2" x2="180.7" y2="4.4" stroke="#b0a080" stroke-width="0.78" opacity="0.84"/><line x1="297.2" y1="22.7" x2="294.9" y2="13.8" stroke="#f0e8d8" stroke-width="0.80" opacity="0.85"/><line x1="283.4" y1="19.3" x2="283.7" y2="6.8" stroke="#c8c0a0" stroke-width="1.00" opacity="0.70"/><line x1="54.6" y1="23.1" x2="57.3" y2="19.2" stroke="#f0e8d8" stroke-width="0.95" opacity="0.59"/><line x1="108.0" y1="2.9" x2="115.3" y2="-4.4" stroke="#a09070" stroke-width="0.75" opacity="0.68"/><line x1="69.5" y1="12.0" x2="68.1" y2="6.5" stroke="#e0d8c0" stroke-width="0.68" opacity="0.70"/><line x1="286.6" y1="20.8" x2="285.9" y2="17.2" stroke="#b0a080" stroke-width="0.68" opacity="0.58"/><line x1="34.2" y1="23.5" x2="31.8" y2="15.5" stroke="#c8c0a0" stroke-width="0.63" opacity="0.63"/><line x1="39.0" y1="0.7" x2="40.3" y2="-2.6" stroke="#242018" stroke-width="1.47" opacity="0.61"/><line x1="225.8" y1="7.8" x2="221.4" y2="-3.5" stroke="#c8c8c0" stroke-width="0.69" opacity="0.69"/><line x1="272.6" y1="1.7" x2="263.5" y2="-5.1" stroke="#6a9848" stroke-width="0.61" opacity="0.63"/><line x1="142.3" y1="9.7" x2="151.2" y2="2.7" stroke="#c8c8c0" stroke-width="0.65" opacity="0.76"/><line x1="126.2" y1="22.4" x2="122.5" y2="18.5" stroke="#c8c0a0" stroke-width="0.97" opacity="0.57"/><line x1="251.1" y1="9.0" x2="247.0" y2="5.1" stroke="#98c068" stroke-width="0.61" opacity="0.66"/><line x1="0.9" y1="13.1" x2="3.3" y2="9.2" stroke="#f0e8d8" stroke-width="0.71" opacity="0.73"/><line x1="132.9" y1="11.8" x2="136.3" y2="8.6" stroke="#c8c0a0" stroke-width="0.58" opacity="0.50"/><line x1="279.2" y1="18.7" x2="270.4" y2="12.3" stroke="#242018" stroke-width="1.76" opacity="0.70"/><line x1="30.1" y1="17.9" x2="33.9" y2="13.0" stroke="#c8c0a0" stroke-width="0.87" opacity="0.91"/><line x1="138.0" y1="14.6" x2="133.6" y2="4.1" stroke="#0e0c08" stroke-width="1.60" opacity="0.50"/><line x1="134.5" y1="21.5" x2="136.3" y2="9.3" stroke="#242018" stroke-width="1.76" opacity="0.84"/><line x1="197.6" y1="1.0" x2="198.5" y2="-7.4" stroke="#242018" stroke-width="1.43" opacity="0.69"/><line x1="270.5" y1="7.2" x2="269.1" y2="2.4" stroke="#242018" stroke-width="0.89" opacity="0.63"/><line x1="236.4" y1="11.0" x2="233.6" y2="5.7" stroke="#242018" stroke-width="1.57" opacity="0.87"/><line x1="183.1" y1="9.4" x2="181.0" y2="-0.8" stroke="#e0d8c0" stroke-width="0.59" opacity="0.58"/><line x1="20.4" y1="11.0" x2="24.4" y2="5.2" stroke="#f0e8d8" stroke-width="0.91" opacity="0.77"/><line x1="234.7" y1="2.5" x2="232.9" y2="-3.9" stroke="#6a9848" stroke-width="0.99" opacity="0.54"/><line x1="248.1" y1="2.8" x2="249.5" y2="-4.0" stroke="#0e0c08" stroke-width="0.99" opacity="0.52"/><line x1="265.0" y1="6.8" x2="271.9" y2="1.2" stroke="#f0e8d8" stroke-width="0.73" opacity="0.53"/><line x1="49.8" y1="1.1" x2="53.2" y2="-5.5" stroke="#c8c8c0" stroke-width="0.82" opacity="0.56"/><line x1="162.5" y1="23.5" x2="157.8" y2="15.2" stroke="#0e0c08" stroke-width="1.30" opacity="0.80"/><line x1="42.7" y1="23.9" x2="38.3" y2="17.0" stroke="#a09070" stroke-width="0.78" opacity="0.86"/><line x1="243.9" y1="11.1" x2="238.1" y2="6.0" stroke="#e0d8c0" stroke-width="0.53" opacity="0.89"/><line x1="290.1" y1="4.4" x2="293.1" y2="-2.5" stroke="#242018" stroke-width="1.24" opacity="0.56"/><line x1="256.1" y1="14.0" x2="257.8" y2="6.3" stroke="#98c068" stroke-width="0.91" opacity="0.64"/><line x1="201.5" y1="3.2" x2="195.1" y2="-3.3" stroke="#0e0c08" stroke-width="1.02" opacity="0.83"/><line x1="13.4" y1="2.0" x2="22.9" y2="-6.0" stroke="#c8c8c0" stroke-width="0.91" opacity="0.62"/><line x1="35.8" y1="21.9" x2="33.1" y2="13.7" stroke="#c8c0a0" stroke-width="0.98" opacity="0.94"/><line x1="188.6" y1="9.0" x2="195.8" y2="1.3" stroke="#e0d8c0" stroke-width="0.58" opacity="0.88"/><line x1="178.8" y1="6.0" x2="185.3" y2="-1.7" stroke="#e0d8c0" stroke-width="0.71" opacity="0.92"/><line x1="54.7" y1="23.9" x2="58.4" y2="14.9" stroke="#c8c8c0" stroke-width="0.61" opacity="0.83"/><line x1="49.8" y1="10.7" x2="53.0" y2="0.6" stroke="#c8c0a0" stroke-width="0.59" opacity="0.70"/><line x1="111.1" y1="8.6" x2="111.8" y2="4.1" stroke="#1a160e" stroke-width="0.94" opacity="0.75"/><line x1="278.2" y1="1.7" x2="281.6" y2="-6.3" stroke="#98c068" stroke-width="0.73" opacity="0.69"/><line x1="66.9" y1="5.5" x2="72.6" y2="-4.1" stroke="#b0a080" stroke-width="0.61" opacity="0.79"/><line x1="221.0" y1="3.7" x2="225.8" y2="-2.1" stroke="#6a9848" stroke-width="0.81" opacity="0.76"/><line x1="58.5" y1="13.3" x2="65.6" y2="5.2" stroke="#c8c0a0" stroke-width="0.70" opacity="0.89"/><line x1="25.9" y1="16.5" x2="20.7" y2="8.2" stroke="#1a160e" stroke-width="1.39" opacity="0.61"/><line x1="265.5" y1="4.2" x2="272.1" y2="-5.2" stroke="#e0d8c0" stroke-width="0.56" opacity="0.91"/><line x1="226.3" y1="17.1" x2="220.6" y2="7.8" stroke="#e0d8c0" stroke-width="0.93" opacity="0.78"/><line x1="43.1" y1="10.3" x2="43.4" y2="3.2" stroke="#a09070" stroke-width="0.96" opacity="0.62"/><line x1="155.3" y1="19.9" x2="147.3" y2="13.9" stroke="#c8c8c0" stroke-width="0.77" opacity="0.93"/><line x1="273.6" y1="17.4" x2="276.7" y2="14.3" stroke="#6a9848" stroke-width="0.74" opacity="0.86"/><line x1="206.5" y1="6.4" x2="205.8" y2="-0.6" stroke="#b0a080" stroke-width="0.77" opacity="0.85"/><line x1="210.9" y1="20.1" x2="205.4" y2="14.6" stroke="#a09070" stroke-width="0.59" opacity="0.57"/><line x1="131.0" y1="2.6" x2="132.0" y2="-4.1" stroke="#c8c8c0" stroke-width="0.70" opacity="0.90"/><line x1="-1.8" y1="17.7" x2="-3.6" y2="13.1" stroke="#0e0c08" stroke-width="1.30" opacity="0.74"/><line x1="297.6" y1="12.5" x2="297.9" y2="2.6" stroke="#98c068" stroke-width="0.66" opacity="0.92"/><line x1="256.3" y1="10.7" x2="258.7" y2="-0.2" stroke="#1a160e" stroke-width="0.99" opacity="0.73"/><line x1="89.9" y1="3.4" x2="89.7" y2="-4.3" stroke="#f0e8d8" stroke-width="0.65" opacity="0.93"/><line x1="161.0" y1="7.3" x2="161.3" y2="2.1" stroke="#1a160e" stroke-width="0.98" opacity="0.55"/><line x1="0.2" y1="10.9" x2="-7.5" y2="3.7" stroke="#f0e8d8" stroke-width="0.94" opacity="0.78"/><line x1="155.1" y1="9.0" x2="153.1" y2="5.4" stroke="#1a160e" stroke-width="1.56" opacity="0.59"/><line x1="219.6" y1="5.0" x2="215.9" y2="0.8" stroke="#b0a080" stroke-width="0.62" opacity="0.89"/><line x1="124.6" y1="6.0" x2="122.6" y2="-1.9" stroke="#c8c0a0" stroke-width="0.76" opacity="0.91"/><line x1="48.3" y1="16.7" x2="51.8" y2="4.8" stroke="#b0a080" stroke-width="0.64" opacity="0.62"/><line x1="92.9" y1="5.5" x2="94.3" y2="-0.3" stroke="#1a160e" stroke-width="1.03" opacity="0.74"/><line x1="94.9" y1="17.6" x2="93.3" y2="8.2" stroke="#0e0c08" stroke-width="1.63" opacity="0.66"/><line x1="257.8" y1="6.6" x2="266.6" y2="0.2" stroke="#c8c0a0" stroke-width="0.93" opacity="0.85"/><line x1="174.0" y1="7.6" x2="177.3" y2="-0.5" stroke="#1a160e" stroke-width="1.17" opacity="0.53"/><line x1="-2.5" y1="13.0" x2="-4.5" y2="8.1" stroke="#1a160e" stroke-width="0.87" opacity="0.61"/><line x1="9.9" y1="20.4" x2="10.8" y2="14.6" stroke="#c8c8c0" stroke-width="0.91" opacity="0.52"/><line x1="238.9" y1="8.8" x2="240.6" y2="3.0" stroke="#e0d8c0" stroke-width="0.74" opacity="0.59"/><line x1="80.7" y1="2.5" x2="82.9" y2="-1.9" stroke="#f0e8d8" stroke-width="0.64" opacity="0.66"/><line x1="257.4" y1="11.3" x2="254.4" y2="1.1" stroke="#6a9848" stroke-width="0.73" opacity="0.52"/><line x1="233.1" y1="3.3" x2="237.1" y2="-2.7" stroke="#4a8038" stroke-width="0.78" opacity="0.67"/><line x1="288.8" y1="9.9" x2="286.6" y2="6.1" stroke="#242018" stroke-width="1.71" opacity="0.54"/><line x1="191.6" y1="2.1" x2="188.9" y2="-3.1" stroke="#242018" stroke-width="1.68" opacity="0.78"/><line x1="111.2" y1="14.6" x2="107.7" y2="7.0" stroke="#f0e8d8" stroke-width="1.00" opacity="0.90"/><line x1="290.4" y1="23.9" x2="284.4" y2="19.1" stroke="#6a9848" stroke-width="0.77" opacity="0.76"/><line x1="121.3" y1="20.5" x2="120.4" y2="16.3" stroke="#242018" stroke-width="1.38" opacity="0.80"/><line x1="201.6" y1="10.6" x2="193.4" y2="1.8" stroke="#0e0c08" stroke-width="1.21" opacity="0.60"/><line x1="177.5" y1="6.3" x2="177.2" y2="-5.7" stroke="#0e0c08" stroke-width="0.91" opacity="0.69"/><line x1="243.6" y1="14.9" x2="243.8" y2="10.9" stroke="#98c068" stroke-width="0.56" opacity="0.53"/><line x1="81.8" y1="14.4" x2="79.6" y2="3.9" stroke="#c8c0a0" stroke-width="0.88" opacity="0.88"/><line x1="175.3" y1="0.3" x2="175.2" y2="-11.2" stroke="#c8c0a0" stroke-width="0.70" opacity="0.87"/><line x1="173.2" y1="11.5" x2="168.9" y2="5.0" stroke="#c8c0a0" stroke-width="0.78" opacity="0.54"/><line x1="229.8" y1="0.8" x2="224.2" y2="-4.7" stroke="#4a8038" stroke-width="0.79" opacity="0.75"/><line x1="32.9" y1="11.7" x2="39.0" y2="5.5" stroke="#c8c0a0" stroke-width="0.76" opacity="0.63"/><line x1="251.7" y1="11.0" x2="249.5" y2="4.2" stroke="#c8c8c0" stroke-width="0.52" opacity="0.95"/><line x1="9.9" y1="8.7" x2="10.7" y2="-4.3" stroke="#c8c0a0" stroke-width="0.68" opacity="0.71"/><line x1="242.0" y1="10.8" x2="243.9" y2="3.4" stroke="#6a9848" stroke-width="0.58" opacity="0.68"/><line x1="232.2" y1="19.9" x2="230.9" y2="10.4" stroke="#4a8038" stroke-width="0.94" opacity="0.85"/><line x1="41.0" y1="9.4" x2="44.8" y2="5.7" stroke="#242018" stroke-width="1.11" opacity="0.70"/><line x1="190.3" y1="22.1" x2="193.3" y2="15.5" stroke="#0e0c08" stroke-width="1.64" opacity="0.83"/><line x1="160.1" y1="21.9" x2="154.5" y2="11.4" stroke="#e0d8c0" stroke-width="0.51" opacity="0.82"/><line x1="181.1" y1="12.5" x2="180.3" y2="-0.6" stroke="#e0d8c0" stroke-width="0.97" opacity="0.80"/><line x1="66.8" y1="19.3" x2="67.3" y2="11.0" stroke="#0e0c08" stroke-width="1.55" opacity="0.66"/><line x1="280.7" y1="3.6" x2="279.4" y2="-5.1" stroke="#f0e8d8" stroke-width="0.66" opacity="0.51"/><line x1="5.0" y1="6.4" x2="13.9" y2="-1.9" stroke="#f0e8d8" stroke-width="0.88" opacity="0.86"/><line x1="231.7" y1="8.6" x2="235.1" y2="5.5" stroke="#4a8038" stroke-width="0.95" opacity="0.93"/><line x1="35.5" y1="22.9" x2="42.3" y2="13.7" stroke="#b0a080" stroke-width="0.77" opacity="0.92"/><line x1="37.9" y1="17.6" x2="40.4" y2="9.1" stroke="#c8c0a0" stroke-width="0.76" opacity="0.60"/><line x1="126.8" y1="16.4" x2="126.9" y2="4.8" stroke="#a09070" stroke-width="0.88" opacity="0.69"/><line x1="21.9" y1="16.8" x2="27.2" y2="10.4" stroke="#e0d8c0" stroke-width="0.96" opacity="0.73"/><line x1="107.9" y1="7.2" x2="110.3" y2="-5.1" stroke="#1a160e" stroke-width="1.41" opacity="0.72"/><line x1="168.4" y1="1.6" x2="167.1" y2="-10.4" stroke="#c8c8c0" stroke-width="0.66" opacity="0.86"/><line x1="156.7" y1="0.6" x2="157.6" y2="-9.5" stroke="#0e0c08" stroke-width="1.35" opacity="0.86"/><line x1="108.0" y1="13.2" x2="102.0" y2="5.4" stroke="#e0d8c0" stroke-width="0.86" opacity="0.90"/><line x1="29.4" y1="4.8" x2="31.1" y2="0.7" stroke="#c8c8c0" stroke-width="0.89" opacity="0.64"/><line x1="261.8" y1="3.5" x2="255.7" y2="-5.7" stroke="#242018" stroke-width="1.03" opacity="0.60"/><line x1="259.2" y1="3.4" x2="255.6" y2="-1.0" stroke="#242018" stroke-width="1.27" opacity="0.73"/><line x1="284.6" y1="15.0" x2="279.9" y2="3.9" stroke="#1a160e" stroke-width="1.49" opacity="0.83"/><line x1="8.3" y1="23.6" x2="14.2" y2="13.8" stroke="#1a160e" stroke-width="1.51" opacity="0.87"/><line x1="87.5" y1="19.9" x2="81.7" y2="9.9" stroke="#242018" stroke-width="0.85" opacity="0.88"/><line x1="31.7" y1="12.5" x2="34.8" y2="5.4" stroke="#b0a080" stroke-width="0.65" opacity="0.58"/><line x1="194.0" y1="17.6" x2="202.5" y2="9.3" stroke="#e0d8c0" stroke-width="0.72" opacity="0.67"/><line x1="213.5" y1="11.0" x2="221.8" y2="3.3" stroke="#1a160e" stroke-width="1.40" opacity="0.66"/><line x1="217.3" y1="12.3" x2="223.2" y2="6.3" stroke="#b0a080" stroke-width="0.78" opacity="0.50"/><line x1="179.6" y1="11.9" x2="182.1" y2="8.5" stroke="#f0e8d8" stroke-width="0.93" opacity="0.59"/><line x1="95.7" y1="10.0" x2="94.7" y2="4.8" stroke="#f0e8d8" stroke-width="0.84" opacity="0.85"/><line x1="260.2" y1="3.2" x2="262.0" y2="-7.8" stroke="#4a8038" stroke-width="0.53" opacity="0.63"/><line x1="230.9" y1="9.8" x2="225.3" y2="3.0" stroke="#c8c8c0" stroke-width="0.72" opacity="0.85"/><line x1="104.8" y1="1.4" x2="107.0" y2="-7.1" stroke="#242018" stroke-width="1.33" opacity="0.88"/><line x1="37.6" y1="18.2" x2="29.8" y2="11.5" stroke="#242018" stroke-width="1.29" opacity="0.89"/><line x1="106.4" y1="20.4" x2="111.0" y2="14.4" stroke="#e0d8c0" stroke-width="0.77" opacity="0.54"/><line x1="6.3" y1="2.2" x2="3.6" y2="-2.6" stroke="#c8c0a0" stroke-width="0.66" opacity="0.54"/><line x1="192.3" y1="12.6" x2="193.7" y2="6.4" stroke="#f0e8d8" stroke-width="0.82" opacity="0.57"/><line x1="234.5" y1="13.7" x2="235.7" y2="3.4" stroke="#a09070" stroke-width="0.84" opacity="0.51"/><line x1="290.6" y1="4.8" x2="295.4" y2="0.8" stroke="#242018" stroke-width="1.48" opacity="0.72"/><line x1="140.6" y1="4.8" x2="147.6" y2="-1.8" stroke="#0e0c08" stroke-width="0.99" opacity="0.51"/><line x1="35.3" y1="18.9" x2="37.2" y2="15.1" stroke="#a09070" stroke-width="0.97" opacity="0.95"/><line x1="128.0" y1="23.8" x2="130.0" y2="11.0" stroke="#e0d8c0" stroke-width="0.95" opacity="0.59"/><line x1="109.8" y1="10.4" x2="115.0" y2="3.2" stroke="#a09070" stroke-width="0.54" opacity="0.92"/><line x1="127.8" y1="13.1" x2="127.5" y2="7.6" stroke="#b0a080" stroke-width="0.74" opacity="0.84"/><line x1="256.6" y1="19.3" x2="256.8" y2="8.9" stroke="#4a8038" stroke-width="0.91" opacity="0.80"/><line x1="73.0" y1="1.0" x2="64.1" y2="-7.0" stroke="#f0e8d8" stroke-width="0.73" opacity="0.62"/><line x1="288.7" y1="5.1" x2="285.9" y2="-2.1" stroke="#c8c0a0" stroke-width="0.51" opacity="0.62"/><line x1="57.8" y1="23.6" x2="59.3" y2="18.7" stroke="#b0a080" stroke-width="0.80" opacity="0.59"/><line x1="167.0" y1="4.7" x2="162.3" y2="-3.7" stroke="#c8c0a0" stroke-width="0.80" opacity="0.72"/><line x1="28.0" y1="18.9" x2="27.3" y2="14.9" stroke="#0e0c08" stroke-width="1.62" opacity="0.64"/><line x1="211.1" y1="9.6" x2="213.7" y2="7.0" stroke="#f0e8d8" stroke-width="0.83" opacity="0.55"/><line x1="3.1" y1="18.8" x2="-1.6" y2="9.3" stroke="#0e0c08" stroke-width="1.27" opacity="0.75"/><line x1="0.3" y1="10.8" x2="-3.0" y2="6.0" stroke="#c8c8c0" stroke-width="0.79" opacity="0.74"/><line x1="272.8" y1="6.0" x2="278.5" y2="-4.6" stroke="#f0e8d8" stroke-width="0.59" opacity="0.60"/><line x1="148.1" y1="21.4" x2="145.1" y2="15.5" stroke="#0e0c08" stroke-width="1.76" opacity="0.64"/><line x1="130.3" y1="9.9" x2="129.1" y2="2.6" stroke="#b0a080" stroke-width="0.97" opacity="0.66"/><line x1="185.0" y1="7.9" x2="183.5" y2="2.9" stroke="#a09070" stroke-width="0.81" opacity="0.78"/><line x1="12.1" y1="2.0" x2="9.5" y2="-8.3" stroke="#f0e8d8" stroke-width="0.87" opacity="0.68"/><line x1="183.4" y1="12.2" x2="176.4" y2="5.8" stroke="#242018" stroke-width="1.55" opacity="0.74"/><line x1="101.0" y1="0.5" x2="102.8" y2="-4.9" stroke="#f0e8d8" stroke-width="0.62" opacity="0.72"/><line x1="8.7" y1="12.7" x2="4.6" y2="7.6" stroke="#242018" stroke-width="1.14" opacity="0.69"/><line x1="231.9" y1="9.4" x2="231.4" y2="3.7" stroke="#4a8038" stroke-width="0.73" opacity="0.50"/><line x1="41.8" y1="8.3" x2="47.3" y2="2.6" stroke="#242018" stroke-width="1.18" opacity="0.58"/><line x1="69.0" y1="0.2" x2="69.2" y2="-8.1" stroke="#a09070" stroke-width="0.87" opacity="0.59"/><line x1="7.5" y1="20.2" x2="5.1" y2="13.0" stroke="#a09070" stroke-width="0.94" opacity="0.86"/><line x1="43.5" y1="18.4" x2="42.4" y2="10.2" stroke="#c8c8c0" stroke-width="0.72" opacity="0.68"/><line x1="28.2" y1="21.6" x2="31.9" y2="18.5" stroke="#b0a080" stroke-width="0.79" opacity="0.88"/><line x1="269.5" y1="9.6" x2="270.8" y2="4.2" stroke="#4a8038" stroke-width="0.67" opacity="0.50"/><line x1="254.7" y1="5.5" x2="259.2" y2="0.7" stroke="#a09070" stroke-width="0.74" opacity="0.81"/><line x1="177.4" y1="19.4" x2="175.5" y2="10.0" stroke="#a09070" stroke-width="0.73" opacity="0.83"/><line x1="269.9" y1="1.7" x2="276.2" y2="-4.6" stroke="#c8c8c0" stroke-width="0.76" opacity="0.89"/><line x1="116.5" y1="22.3" x2="112.4" y2="15.9" stroke="#e0d8c0" stroke-width="0.61" opacity="0.54"/><line x1="177.2" y1="16.4" x2="171.1" y2="8.9" stroke="#c8c0a0" stroke-width="0.55" opacity="0.79"/><line x1="182.8" y1="7.0" x2="179.2" y2="3.6" stroke="#c8c0a0" stroke-width="0.90" opacity="0.71"/><line x1="209.6" y1="10.6" x2="215.1" y2="5.5" stroke="#c8c0a0" stroke-width="0.75" opacity="0.63"/><line x1="65.1" y1="16.0" x2="65.8" y2="12.0" stroke="#c8c8c0" stroke-width="0.82" opacity="0.79"/><line x1="285.0" y1="21.0" x2="283.2" y2="8.2" stroke="#c8c0a0" stroke-width="0.56" opacity="0.57"/><line x1="55.3" y1="14.1" x2="52.9" y2="9.2" stroke="#0e0c08" stroke-width="1.42" opacity="0.63"/><line x1="127.2" y1="3.8" x2="121.6" y2="-2.0" stroke="#a09070" stroke-width="0.77" opacity="0.81"/><line x1="134.0" y1="18.9" x2="135.2" y2="13.5" stroke="#b0a080" stroke-width="0.93" opacity="0.51"/><line x1="266.5" y1="11.0" x2="270.1" y2="6.8" stroke="#0e0c08" stroke-width="1.56" opacity="0.51"/><line x1="297.8" y1="0.8" x2="304.7" y2="-6.0" stroke="#b0a080" stroke-width="0.82" opacity="0.76"/><line x1="107.4" y1="0.9" x2="113.7" y2="-7.4" stroke="#b0a080" stroke-width="0.84" opacity="0.54"/><line x1="165.9" y1="1.2" x2="165.9" y2="-4.0" stroke="#f0e8d8" stroke-width="0.71" opacity="0.56"/><line x1="187.3" y1="21.7" x2="187.5" y2="14.9" stroke="#c8c0a0" stroke-width="0.54" opacity="0.71"/><line x1="60.9" y1="1.9" x2="57.5" y2="-2.3" stroke="#c8c8c0" stroke-width="0.66" opacity="0.87"/><line x1="41.8" y1="7.6" x2="46.9" y2="-1.8" stroke="#242018" stroke-width="1.76" opacity="0.86"/><line x1="104.2" y1="16.1" x2="96.5" y2="7.9" stroke="#0e0c08" stroke-width="1.39" opacity="0.50"/><line x1="176.0" y1="20.6" x2="173.7" y2="11.1" stroke="#f0e8d8" stroke-width="0.73" opacity="0.77"/><line x1="38.6" y1="17.5" x2="36.4" y2="13.3" stroke="#c8c8c0" stroke-width="0.96" opacity="0.88"/><line x1="196.6" y1="3.3" x2="196.6" y2="-7.9" stroke="#1a160e" stroke-width="1.78" opacity="0.69"/><line x1="241.1" y1="18.3" x2="246.4" y2="8.1" stroke="#98c068" stroke-width="0.87" opacity="0.79"/><line x1="108.7" y1="13.3" x2="112.8" y2="5.1" stroke="#1a160e" stroke-width="1.18" opacity="0.89"/><line x1="159.4" y1="0.3" x2="162.2" y2="-4.2" stroke="#c8c8c0" stroke-width="0.69" opacity="0.55"/><line x1="62.6" y1="17.9" x2="67.3" y2="12.7" stroke="#f0e8d8" stroke-width="0.65" opacity="0.74"/><line x1="178.2" y1="3.3" x2="174.8" y2="-2.3" stroke="#242018" stroke-width="1.60" opacity="0.72"/><line x1="133.4" y1="9.3" x2="135.7" y2="0.8" stroke="#242018" stroke-width="1.46" opacity="0.58"/><line x1="47.3" y1="10.0" x2="43.0" y2="-0.5" stroke="#c8c0a0" stroke-width="0.66" opacity="0.79"/><line x1="27.8" y1="23.8" x2="33.8" y2="14.4" stroke="#b0a080" stroke-width="0.53" opacity="0.86"/><line x1="57.1" y1="20.8" x2="52.2" y2="14.3" stroke="#b0a080" stroke-width="0.51" opacity="0.62"/><line x1="136.8" y1="18.1" x2="133.8" y2="9.4" stroke="#242018" stroke-width="0.81" opacity="0.62"/><line x1="1.1" y1="15.4" x2="5.8" y2="6.0" stroke="#e0d8c0" stroke-width="0.89" opacity="0.86"/><line x1="209.3" y1="3.4" x2="200.2" y2="-4.4" stroke="#c8c0a0" stroke-width="0.85" opacity="0.58"/><line x1="182.6" y1="20.8" x2="187.7" y2="14.2" stroke="#a09070" stroke-width="0.94" opacity="0.84"/><line x1="14.8" y1="20.5" x2="10.8" y2="15.8" stroke="#c8c0a0" stroke-width="0.69" opacity="0.55"/><line x1="208.2" y1="12.9" x2="212.4" y2="4.0" stroke="#0e0c08" stroke-width="0.91" opacity="0.69"/><line x1="284.6" y1="12.7" x2="287.4" y2="9.5" stroke="#98c068" stroke-width="0.58" opacity="0.53"/><line x1="81.9" y1="9.3" x2="79.2" y2="0.4" stroke="#f0e8d8" stroke-width="0.64" opacity="0.73"/><line x1="55.3" y1="17.6" x2="52.2" y2="11.3" stroke="#0e0c08" stroke-width="1.29" opacity="0.89"/><line x1="277.2" y1="11.8" x2="277.2" y2="6.8" stroke="#6a9848" stroke-width="0.64" opacity="0.74"/><line x1="161.3" y1="3.0" x2="164.5" y2="-2.5" stroke="#e0d8c0" stroke-width="0.57" opacity="0.88"/><line x1="199.4" y1="16.6" x2="205.7" y2="10.9" stroke="#a09070" stroke-width="0.85" opacity="0.62"/><line x1="32.5" y1="6.0" x2="34.6" y2="-5.6" stroke="#1a160e" stroke-width="1.71" opacity="0.72"/><line x1="210.1" y1="8.6" x2="206.8" y2="5.1" stroke="#c8c8c0" stroke-width="0.67" opacity="0.83"/><line x1="122.5" y1="21.1" x2="128.4" y2="15.5" stroke="#e0d8c0" stroke-width="0.56" opacity="0.50"/><line x1="117.1" y1="21.8" x2="121.4" y2="17.8" stroke="#f0e8d8" stroke-width="0.53" opacity="0.72"/><line x1="266.1" y1="22.5" x2="270.4" y2="12.2" stroke="#c8c0a0" stroke-width="0.92" opacity="0.75"/><line x1="131.7" y1="4.5" x2="130.1" y2="-1.9" stroke="#b0a080" stroke-width="0.50" opacity="0.79"/><line x1="66.2" y1="2.0" x2="71.7" y2="-4.1" stroke="#242018" stroke-width="1.56" opacity="0.65"/><line x1="126.9" y1="2.6" x2="125.0" y2="-4.2" stroke="#c8c8c0" stroke-width="0.55" opacity="0.91"/><line x1="122.4" y1="2.7" x2="125.9" y2="-3.4" stroke="#f0e8d8" stroke-width="0.85" opacity="0.74"/><line x1="188.3" y1="16.3" x2="191.1" y2="13.4" stroke="#e0d8c0" stroke-width="0.79" opacity="0.51"/><line x1="191.1" y1="18.4" x2="190.6" y2="12.6" stroke="#a09070" stroke-width="0.53" opacity="0.66"/><line x1="153.3" y1="15.2" x2="151.4" y2="6.3" stroke="#e0d8c0" stroke-width="0.94" opacity="0.91"/><line x1="288.8" y1="4.0" x2="284.3" y2="0.2" stroke="#f0e8d8" stroke-width="0.76" opacity="0.52"/><line x1="110.5" y1="13.2" x2="109.6" y2="7.4" stroke="#c8c8c0" stroke-width="0.53" opacity="0.76"/><line x1="23.0" y1="11.8" x2="25.8" y2="7.2" stroke="#c8c8c0" stroke-width="0.57" opacity="0.61"/><line x1="122.8" y1="13.5" x2="125.4" y2="8.7" stroke="#c8c8c0" stroke-width="0.54" opacity="0.60"/><line x1="76.7" y1="3.7" x2="74.9" y2="-1.1" stroke="#c8c8c0" stroke-width="0.82" opacity="0.93"/><line x1="256.8" y1="14.3" x2="253.8" y2="11.4" stroke="#f0e8d8" stroke-width="0.55" opacity="0.88"/><line x1="236.6" y1="5.7" x2="236.5" y2="0.5" stroke="#c8c0a0" stroke-width="0.52" opacity="0.68"/><line x1="44.9" y1="13.5" x2="37.4" y2="5.4" stroke="#f0e8d8" stroke-width="0.82" opacity="0.59"/><line x1="67.8" y1="17.0" x2="72.5" y2="8.5" stroke="#e0d8c0" stroke-width="0.81" opacity="0.86"/><line x1="200.5" y1="14.1" x2="199.6" y2="4.4" stroke="#f0e8d8" stroke-width="0.86" opacity="0.79"/><line x1="238.4" y1="18.9" x2="241.8" y2="16.4" stroke="#f0e8d8" stroke-width="0.85" opacity="0.89"/><line x1="175.7" y1="20.8" x2="171.7" y2="17.0" stroke="#1a160e" stroke-width="1.14" opacity="0.73"/><line x1="132.8" y1="12.7" x2="135.7" y2="7.2" stroke="#242018" stroke-width="1.23" opacity="0.71"/><line x1="91.3" y1="13.8" x2="96.5" y2="8.1" stroke="#c8c0a0" stroke-width="0.92" opacity="0.86"/><line x1="169.3" y1="11.6" x2="164.0" y2="2.8" stroke="#0e0c08" stroke-width="1.74" opacity="0.57"/><line x1="9.8" y1="13.5" x2="4.5" y2="3.5" stroke="#a09070" stroke-width="0.66" opacity="0.79"/><line x1="250.3" y1="9.1" x2="257.0" y2="2.4" stroke="#b0a080" stroke-width="0.89" opacity="0.93"/><line x1="126.0" y1="18.0" x2="126.1" y2="7.7" stroke="#a09070" stroke-width="0.60" opacity="0.94"/><line x1="75.1" y1="2.2" x2="75.1" y2="-5.3" stroke="#c8c8c0" stroke-width="0.86" opacity="0.64"/><line x1="212.0" y1="18.6" x2="216.7" y2="13.7" stroke="#f0e8d8" stroke-width="0.91" opacity="0.61"/><line x1="289.1" y1="3.9" x2="287.8" y2="-2.5" stroke="#c8c0a0" stroke-width="0.60" opacity="0.58"/><line x1="218.4" y1="17.6" x2="217.3" y2="11.5" stroke="#4a8038" stroke-width="0.90" opacity="0.68"/><line x1="235.9" y1="16.7" x2="238.0" y2="7.9" stroke="#c8c8c0" stroke-width="0.89" opacity="0.89"/><line x1="229.2" y1="17.5" x2="233.9" y2="12.1" stroke="#b0a080" stroke-width="0.62" opacity="0.79"/><line x1="220.2" y1="21.0" x2="218.5" y2="11.5" stroke="#4a8038" stroke-width="0.87" opacity="0.95"/><line x1="175.1" y1="0.3" x2="172.1" y2="-2.4" stroke="#e0d8c0" stroke-width="0.67" opacity="0.83"/><line x1="292.0" y1="1.7" x2="287.6" y2="-1.8" stroke="#4a8038" stroke-width="0.91" opacity="0.56"/><line x1="229.6" y1="13.0" x2="234.6" y2="7.0" stroke="#1a160e" stroke-width="1.69" opacity="0.54"/><line x1="183.2" y1="21.9" x2="179.4" y2="17.7" stroke="#c8c0a0" stroke-width="0.75" opacity="0.70"/><line x1="287.7" y1="3.2" x2="289.9" y2="-2.5" stroke="#4a8038" stroke-width="0.66" opacity="0.69"/><line x1="272.2" y1="3.8" x2="271.0" y2="-4.6" stroke="#e0d8c0" stroke-width="0.77" opacity="0.89"/><line x1="-2.4" y1="15.7" x2="-1.0" y2="9.8" stroke="#c8c0a0" stroke-width="0.99" opacity="0.88"/><line x1="143.7" y1="0.9" x2="142.9" y2="-9.9" stroke="#c8c8c0" stroke-width="0.75" opacity="0.94"/><line x1="76.6" y1="17.7" x2="82.0" y2="10.2" stroke="#242018" stroke-width="1.67" opacity="0.54"/><line x1="1.2" y1="19.9" x2="-1.4" y2="10.2" stroke="#c8c0a0" stroke-width="0.70" opacity="0.55"/><line x1="27.8" y1="18.4" x2="25.9" y2="7.0" stroke="#a09070" stroke-width="0.71" opacity="0.88"/><line x1="99.1" y1="19.8" x2="96.6" y2="9.4" stroke="#242018" stroke-width="1.78" opacity="0.75"/><line x1="273.6" y1="10.6" x2="272.5" y2="-0.7" stroke="#a09070" stroke-width="0.72" opacity="0.92"/><line x1="86.6" y1="12.4" x2="93.7" y2="5.1" stroke="#a09070" stroke-width="0.50" opacity="0.81"/><line x1="161.8" y1="22.1" x2="158.4" y2="19.7" stroke="#0e0c08" stroke-width="1.49" opacity="0.60"/><line x1="-3.5" y1="21.3" x2="-1.8" y2="17.8" stroke="#242018" stroke-width="1.12" opacity="0.78"/><line x1="177.9" y1="12.2" x2="174.0" y2="4.8" stroke="#b0a080" stroke-width="0.56" opacity="0.73"/><line x1="85.1" y1="12.7" x2="94.4" y2="4.5" stroke="#b0a080" stroke-width="0.61" opacity="0.92"/><line x1="279.6" y1="0.4" x2="274.5" y2="-5.8" stroke="#4a8038" stroke-width="0.60" opacity="0.61"/><line x1="231.5" y1="14.7" x2="231.8" y2="9.7" stroke="#f0e8d8" stroke-width="0.60" opacity="0.62"/><line x1="113.4" y1="16.5" x2="115.3" y2="12.5" stroke="#c8c8c0" stroke-width="0.88" opacity="0.70"/><line x1="135.5" y1="15.3" x2="145.7" y2="7.5" stroke="#c8c0a0" stroke-width="0.83" opacity="0.92"/><line x1="146.8" y1="1.1" x2="147.3" y2="-6.3" stroke="#1a160e" stroke-width="1.75" opacity="0.73"/><line x1="206.0" y1="0.5" x2="209.7" y2="-3.9" stroke="#1a160e" stroke-width="1.59" opacity="0.71"/><line x1="210.8" y1="14.5" x2="213.3" y2="6.7" stroke="#e0d8c0" stroke-width="0.97" opacity="0.66"/><line x1="270.3" y1="19.0" x2="271.5" y2="13.4" stroke="#98c068" stroke-width="0.75" opacity="0.66"/><line x1="281.4" y1="20.5" x2="277.4" y2="10.9" stroke="#1a160e" stroke-width="1.08" opacity="0.82"/><line x1="184.1" y1="8.0" x2="184.6" y2="-1.3" stroke="#e0d8c0" stroke-width="0.64" opacity="0.67"/><line x1="112.9" y1="23.1" x2="107.4" y2="18.3" stroke="#f0e8d8" stroke-width="0.90" opacity="0.67"/><line x1="296.1" y1="22.8" x2="296.2" y2="15.4" stroke="#1a160e" stroke-width="0.81" opacity="0.53"/><line x1="140.2" y1="23.6" x2="136.9" y2="15.9" stroke="#a09070" stroke-width="0.59" opacity="0.59"/><line x1="244.3" y1="15.9" x2="237.2" y2="7.4" stroke="#b0a080" stroke-width="0.57" opacity="0.89"/><line x1="235.8" y1="17.5" x2="237.5" y2="7.6" stroke="#e0d8c0" stroke-width="0.99" opacity="0.51"/><line x1="68.5" y1="9.0" x2="61.1" y2="2.1" stroke="#242018" stroke-width="1.70" opacity="0.73"/><line x1="81.4" y1="22.6" x2="72.6" y2="15.8" stroke="#b0a080" stroke-width="0.89" opacity="0.55"/><line x1="108.0" y1="18.8" x2="101.0" y2="13.3" stroke="#0e0c08" stroke-width="0.96" opacity="0.72"/><line x1="72.7" y1="16.3" x2="76.5" y2="13.0" stroke="#1a160e" stroke-width="1.17" opacity="0.62"/><line x1="232.6" y1="21.2" x2="229.3" y2="17.4" stroke="#c8c0a0" stroke-width="0.62" opacity="0.52"/><line x1="293.9" y1="4.2" x2="298.1" y2="-7.4" stroke="#6a9848" stroke-width="0.83" opacity="0.89"/><line x1="120.6" y1="0.2" x2="113.7" y2="-6.7" stroke="#c8c8c0" stroke-width="0.52" opacity="0.78"/><line x1="199.0" y1="21.8" x2="196.6" y2="15.4" stroke="#c8c0a0" stroke-width="0.70" opacity="0.50"/><line x1="215.0" y1="2.1" x2="218.0" y2="-4.2" stroke="#c8c8c0" stroke-width="0.82" opacity="0.56"/><line x1="185.8" y1="22.7" x2="184.1" y2="10.4" stroke="#1a160e" stroke-width="1.00" opacity="0.75"/><line x1="14.8" y1="21.9" x2="14.0" y2="12.7" stroke="#e0d8c0" stroke-width="0.70" opacity="0.61"/><line x1="30.1" y1="3.3" x2="22.6" y2="-3.1" stroke="#c8c8c0" stroke-width="0.82" opacity="0.54"/><line x1="102.7" y1="14.3" x2="102.1" y2="10.6" stroke="#c8c8c0" stroke-width="0.91" opacity="0.53"/><line x1="154.1" y1="1.8" x2="151.2" y2="-6.5" stroke="#242018" stroke-width="1.18" opacity="0.58"/><line x1="113.7" y1="7.5" x2="114.4" y2="-3.3" stroke="#a09070" stroke-width="0.86" opacity="0.61"/><line x1="290.9" y1="20.2" x2="291.5" y2="16.3" stroke="#c8c8c0" stroke-width="0.60" opacity="0.61"/><line x1="175.1" y1="16.1" x2="168.4" y2="7.6" stroke="#e0d8c0" stroke-width="0.90" opacity="0.60"/><line x1="265.4" y1="2.0" x2="270.4" y2="-6.8" stroke="#f0e8d8" stroke-width="0.91" opacity="0.74"/><line x1="233.8" y1="15.9" x2="238.3" y2="6.2" stroke="#0e0c08" stroke-width="1.22" opacity="0.52"/><line x1="97.4" y1="20.4" x2="99.6" y2="17.3" stroke="#242018" stroke-width="1.45" opacity="0.88"/><line x1="177.7" y1="11.8" x2="177.3" y2="6.2" stroke="#c8c8c0" stroke-width="0.66" opacity="0.88"/><line x1="75.6" y1="16.8" x2="74.7" y2="11.1" stroke="#b0a080" stroke-width="0.88" opacity="0.72"/><line x1="141.0" y1="4.5" x2="143.0" y2="-7.3" stroke="#b0a080" stroke-width="0.85" opacity="0.79"/><line x1="252.9" y1="9.3" x2="257.0" y2="5.6" stroke="#c8c8c0" stroke-width="0.61" opacity="0.60"/><line x1="77.8" y1="20.2" x2="77.4" y2="11.5" stroke="#0e0c08" stroke-width="1.56" opacity="0.59"/><line x1="122.3" y1="6.0" x2="118.5" y2="-3.2" stroke="#1a160e" stroke-width="1.26" opacity="0.50"/><line x1="268.7" y1="23.3" x2="267.4" y2="17.6" stroke="#0e0c08" stroke-width="1.06" opacity="0.65"/><line x1="90.2" y1="8.3" x2="88.7" y2="0.2" stroke="#b0a080" stroke-width="0.51" opacity="0.62"/><line x1="206.1" y1="12.1" x2="208.7" y2="8.7" stroke="#f0e8d8" stroke-width="0.63" opacity="0.88"/><line x1="204.9" y1="8.5" x2="206.3" y2="-1.3" stroke="#b0a080" stroke-width="0.57" opacity="0.63"/><line x1="110.8" y1="21.1" x2="108.6" y2="9.4" stroke="#f0e8d8" stroke-width="0.91" opacity="0.52"/><line x1="2.9" y1="15.7" x2="-1.1" y2="6.8" stroke="#1a160e" stroke-width="1.39" opacity="0.67"/><line x1="35.8" y1="0.8" x2="44.4" y2="-6.0" stroke="#f0e8d8" stroke-width="0.74" opacity="0.67"/><line x1="138.9" y1="8.0" x2="145.1" y2="0.7" stroke="#c8c8c0" stroke-width="0.70" opacity="0.51"/><line x1="273.0" y1="3.6" x2="274.5" y2="-9.1" stroke="#e0d8c0" stroke-width="0.72" opacity="0.91"/><line x1="-0.1" y1="1.5" x2="-5.1" y2="-2.9" stroke="#242018" stroke-width="1.42" opacity="0.51"/><line x1="213.1" y1="5.9" x2="221.8" y2="-1.4" stroke="#242018" stroke-width="1.21" opacity="0.83"/><line x1="75.7" y1="19.8" x2="77.6" y2="11.4" stroke="#f0e8d8" stroke-width="0.67" opacity="0.70"/><line x1="144.0" y1="5.5" x2="141.9" y2="2.6" stroke="#242018" stroke-width="1.17" opacity="0.60"/><line x1="263.3" y1="5.3" x2="261.1" y2="-6.9" stroke="#1a160e" stroke-width="1.26" opacity="0.64"/><line x1="229.1" y1="6.7" x2="236.7" y2="-1.3" stroke="#b0a080" stroke-width="0.96" opacity="0.67"/><line x1="41.7" y1="12.5" x2="44.2" y2="5.7" stroke="#0e0c08" stroke-width="1.16" opacity="0.85"/><line x1="255.0" y1="19.9" x2="249.0" y2="9.9" stroke="#f0e8d8" stroke-width="0.74" opacity="0.58"/><line x1="36.3" y1="2.1" x2="39.8" y2="-0.8" stroke="#f0e8d8" stroke-width="0.76" opacity="0.68"/><line x1="59.7" y1="14.2" x2="56.7" y2="11.0" stroke="#b0a080" stroke-width="0.95" opacity="0.88"/><line x1="93.4" y1="22.4" x2="88.8" y2="18.8" stroke="#242018" stroke-width="0.83" opacity="0.59"/><line x1="292.6" y1="14.2" x2="291.3" y2="8.8" stroke="#242018" stroke-width="1.37" opacity="0.79"/><line x1="179.2" y1="0.5" x2="180.0" y2="-5.6" stroke="#f0e8d8" stroke-width="0.90" opacity="0.94"/><line x1="163.6" y1="20.2" x2="165.3" y2="9.0" stroke="#242018" stroke-width="1.14" opacity="0.63"/><line x1="190.6" y1="0.0" x2="191.1" y2="-13.1" stroke="#e0d8c0" stroke-width="0.56" opacity="0.72"/><line x1="262.8" y1="20.4" x2="261.1" y2="12.2" stroke="#f0e8d8" stroke-width="0.65" opacity="0.88"/><line x1="288.2" y1="14.2" x2="287.3" y2="8.4" stroke="#a09070" stroke-width="0.50" opacity="0.60"/><line x1="223.4" y1="20.6" x2="220.5" y2="14.1" stroke="#b0a080" stroke-width="0.60" opacity="0.90"/><line x1="236.4" y1="15.2" x2="242.7" y2="7.2" stroke="#e0d8c0" stroke-width="0.54" opacity="0.87"/><line x1="267.6" y1="14.7" x2="264.8" y2="3.0" stroke="#98c068" stroke-width="0.81" opacity="0.75"/><line x1="293.2" y1="18.5" x2="291.5" y2="7.3" stroke="#c8c0a0" stroke-width="0.67" opacity="0.80"/><line x1="277.2" y1="8.3" x2="280.6" y2="-0.1" stroke="#98c068" stroke-width="0.76" opacity="0.93"/><line x1="234.6" y1="9.9" x2="235.2" y2="1.0" stroke="#e0d8c0" stroke-width="0.80" opacity="0.74"/><line x1="285.2" y1="18.5" x2="281.3" y2="8.4" stroke="#6a9848" stroke-width="0.90" opacity="0.73"/><line x1="244.3" y1="16.0" x2="249.2" y2="10.6" stroke="#a09070" stroke-width="0.74" opacity="0.79"/><line x1="218.3" y1="8.9" x2="213.7" y2="4.5" stroke="#b0a080" stroke-width="0.67" opacity="0.91"/><line x1="247.6" y1="10.8" x2="250.6" y2="6.2" stroke="#c8c8c0" stroke-width="0.72" opacity="0.70"/><line x1="221.9" y1="16.2" x2="227.8" y2="8.0" stroke="#98c068" stroke-width="0.62" opacity="0.79"/><line x1="246.7" y1="12.1" x2="248.4" y2="2.1" stroke="#98c068" stroke-width="0.62" opacity="0.63"/><line x1="274.6" y1="9.9" x2="269.7" y2="5.6" stroke="#f0e8d8" stroke-width="0.56" opacity="0.73"/><line x1="261.0" y1="15.1" x2="263.7" y2="6.2" stroke="#c8c0a0" stroke-width="0.85" opacity="0.86"/><line x1="252.6" y1="16.9" x2="247.3" y2="11.1" stroke="#c8c8c0" stroke-width="0.81" opacity="0.79"/><line x1="289.3" y1="11.7" x2="294.4" y2="7.1" stroke="#4a8038" stroke-width="0.59" opacity="0.91"/><line x1="287.5" y1="8.5" x2="293.9" y2="-2.2" stroke="#a09070" stroke-width="0.83" opacity="0.73"/><line x1="241.2" y1="16.8" x2="233.5" y2="7.2" stroke="#4a8038" stroke-width="0.85" opacity="0.69"/><line x1="230.8" y1="21.8" x2="233.8" y2="15.5" stroke="#98c068" stroke-width="0.86" opacity="0.88"/><line x1="237.7" y1="20.2" x2="241.1" y2="8.4" stroke="#f0e8d8" stroke-width="0.81" opacity="0.75"/><line x1="235.6" y1="20.1" x2="230.4" y2="13.4" stroke="#c8c0a0" stroke-width="0.89" opacity="0.61"/><line x1="271.2" y1="8.6" x2="278.5" y2="-2.0" stroke="#4a8038" stroke-width="0.53" opacity="0.83"/><line x1="267.4" y1="20.2" x2="266.6" y2="12.9" stroke="#6a9848" stroke-width="0.78" opacity="0.92"/><line x1="249.5" y1="21.7" x2="250.3" y2="12.8" stroke="#c8c8c0" stroke-width="0.75" opacity="0.70"/><line x1="268.5" y1="9.0" x2="274.2" y2="1.4" stroke="#c8c8c0" stroke-width="0.64" opacity="0.65"/><line x1="229.0" y1="17.8" x2="229.4" y2="4.2" stroke="#a09070" stroke-width="0.89" opacity="0.79"/><line x1="286.9" y1="17.2" x2="288.0" y2="9.4" stroke="#6a9848" stroke-width="0.83" opacity="0.67"/><line x1="283.0" y1="10.5" x2="285.7" y2="-3.6" stroke="#e0d8c0" stroke-width="0.69" opacity="0.89"/><line x1="273.2" y1="17.8" x2="275.9" y2="10.5" stroke="#c8c0a0" stroke-width="0.53" opacity="0.61"/><line x1="250.7" y1="12.2" x2="252.5" y2="4.8" stroke="#a09070" stroke-width="0.51" opacity="0.88"/><line x1="262.9" y1="15.2" x2="271.8" y2="7.6" stroke="#c8c0a0" stroke-width="0.84" opacity="0.86"/><line x1="280.0" y1="13.7" x2="287.7" y2="6.4" stroke="#c8c0a0" stroke-width="0.52" opacity="0.69"/><line x1="263.1" y1="10.2" x2="267.2" y2="5.9" stroke="#6a9848" stroke-width="0.79" opacity="0.78"/><line x1="290.6" y1="15.8" x2="288.3" y2="8.1" stroke="#4a8038" stroke-width="0.70" opacity="0.65"/><line x1="233.1" y1="10.6" x2="233.7" y2="3.0" stroke="#e0d8c0" stroke-width="0.84" opacity="0.64"/><line x1="274.1" y1="17.9" x2="277.3" y2="12.9" stroke="#a09070" stroke-width="0.60" opacity="0.77"/><line x1="265.9" y1="13.5" x2="270.9" y2="3.5" stroke="#4a8038" stroke-width="0.56" opacity="0.71"/><line x1="284.8" y1="18.6" x2="280.2" y2="9.5" stroke="#c8c0a0" stroke-width="0.88" opacity="0.72"/><line x1="249.2" y1="20.9" x2="253.7" y2="12.6" stroke="#c8c0a0" stroke-width="0.90" opacity="0.60"/><line x1="233.9" y1="8.7" x2="235.8" y2="1.4" stroke="#f0e8d8" stroke-width="0.61" opacity="0.65"/><line x1="261.3" y1="17.4" x2="266.4" y2="5.5" stroke="#4a8038" stroke-width="0.65" opacity="0.66"/><line x1="250.8" y1="17.1" x2="249.5" y2="8.8" stroke="#98c068" stroke-width="0.72" opacity="0.70"/><line x1="264.1" y1="16.5" x2="273.2" y2="6.0" stroke="#c8c0a0" stroke-width="0.58" opacity="0.93"/><line x1="244.0" y1="17.3" x2="238.0" y2="11.4" stroke="#b0a080" stroke-width="0.85" opacity="0.76"/><line x1="221.3" y1="13.2" x2="221.8" y2="6.1" stroke="#a09070" stroke-width="0.54" opacity="0.66"/><line x1="239.8" y1="20.8" x2="239.6" y2="8.8" stroke="#e0d8c0" stroke-width="0.62" opacity="0.92"/><line x1="274.8" y1="22.3" x2="265.2" y2="13.9" stroke="#c8c0a0" stroke-width="0.54" opacity="0.81"/><line x1="264.9" y1="18.6" x2="256.3" y2="10.7" stroke="#6a9848" stroke-width="0.55" opacity="0.84"/><line x1="268.9" y1="21.2" x2="276.1" y2="11.4" stroke="#4a8038" stroke-width="0.69" opacity="0.78"/><line x1="215.5" y1="10.5" x2="214.2" y2="3.4" stroke="#4a8038" stroke-width="0.54" opacity="0.64"/><line x1="250.3" y1="10.9" x2="249.9" y2="1.9" stroke="#a09070" stroke-width="0.84" opacity="0.94"/><line x1="276.6" y1="14.1" x2="285.4" y2="6.2" stroke="#a09070" stroke-width="0.57" opacity="0.90"/><line x1="215.0" y1="18.7" x2="215.5" y2="3.4" stroke="#c8c8c0" stroke-width="0.79" opacity="0.81"/><line x1="289.5" y1="21.3" x2="282.1" y2="14.9" stroke="#f0e8d8" stroke-width="0.66" opacity="0.90"/><line x1="237.3" y1="19.6" x2="243.2" y2="9.5" stroke="#c8c0a0" stroke-width="0.55" opacity="0.69"/><line x1="241.4" y1="18.1" x2="250.8" y2="8.8" stroke="#e0d8c0" stroke-width="0.80" opacity="0.66"/><line x1="250.4" y1="8.7" x2="249.0" y2="-4.4" stroke="#a09070" stroke-width="0.61" opacity="0.66"/><line x1="217.4" y1="14.1" x2="221.5" y2="3.9" stroke="#b0a080" stroke-width="0.66" opacity="0.61"/><ellipse cx="132" cy="11" rx="5.5" ry="8.5" fill="#d0ccc0"/><ellipse cx="130" cy="8" rx="3" ry="4" fill="#e8e4dc"/><rect width="294" height="1" fill="#141410" opacity="0.8"/></svg>

<!-- taskbar -->
<div class="a" style="left:0;top:499px;width:640px;height:13px;background:linear-gradient(#5e665c 0px,#505250 2px,#2e2e2e 5.5px,#000 6.5px,#0c0c0c 7.5px,#3a3a3a 10.5px,#787878 13px)"></div>


<svg class="a" style="left:2px;top:499px" width="15" height="12" viewBox="0 0 15 12"><path d="M11,1 L15,11" stroke="#c0c0c0" stroke-width="1.2" fill="none"/><path d="M1,8 L11,1 L12,4 L4,10 Z" fill="#a8a8a8"/><path d="M3,8.5 L5,7 M5,9 L7,7.5 M7,8 L9,6" stroke="#303030" stroke-width="0.8"/></svg>
<div class="a" style="left:19px;top:500px;width:9px;height:11px;background:#c8c8c0;border:1px solid #888"></div>
<div class="a" style="left:21px;top:503px;width:5px;height:1px;background:#777"></div><div class="a" style="left:21px;top:505px;width:5px;height:1px;background:#777"></div><div class="a" style="left:21px;top:507px;width:5px;height:1px;background:#777"></div>
<svg class="a" style="left:31.5px;top:499.5px" width="11" height="11" viewBox="0 0 11 11"><circle cx="5.5" cy="5.5" r="5.2" fill="#c8d8e8"/><path d="M3,1.5 C5,2 5,4 3.5,5 C2,6 2.5,8 3,10 C1,9 0.3,7 0.5,5 C0.8,3.5 1.8,2 3,1.5 Z M6.5,4 C8,4.5 9.5,5 10.5,6 C10,8.5 8.5,10 6.5,10.5 C7,9 8,8 7,7 C6,6.5 6,5 6.5,4 Z" fill="#3a5a8a"/><circle cx="4.5" cy="3.5" r="1.5" fill="#f4f8fc" opacity="0.8"/></svg>
<div class="a" style="left:46px;top:501px;width:8px;height:6px;background:#e8ecf0;border-top:2px solid #4a70a8"></div>
<div class="a" style="left:49px;top:504px;width:8px;height:6px;background:#f0f0f0;border:1px solid #999"></div>
<div class="a" style="left:60px;top:499px;width:13px;height:11px;background:#5a3a1a"></div><div class="a" style="left:61px;top:500px;width:11px;height:9px;background:#d06818;border:1px solid #f0b070;border-radius:1px"></div>
<div class="a" style="left:73px;top:499px;width:13px;height:11px;background:#b0aeaa"></div>
<div class="a" style="left:89px;top:499px;width:75px;height:12px;background:linear-gradient(#e0e0e0,#c4c4c4);border:1px solid #888"></div>
<div class="a" style="left:91px;top:501px;width:10px;height:8px;background:#f0f4f8;border-top:2px solid #5a80b8;border-left:1px solid #789;border-right:1px solid #789;border-bottom:1px solid #789"></div>
<div class="t" style="left:101px;top:501.5px;font-size:7px;color:#111">Wobulateur ATm...</div>
<div class="a" style="left:573px;top:500px;width:18px;height:11px;background:#050505"></div>
<svg class="a" style="left:573px;top:500px" width="18" height="11" viewBox="0 0 18 11"><path d="M0,11 L0,9 L2,8 L3,10 L5,9 L6,6 L7,9 L8,3 L9,8 L10,5 L11,9 L13,8 L14,4 L15,9 L17,8 L18,11 Z" fill="#30d030"/><rect x="8.5" y="0" width="1" height="11" fill="#222"/></svg>
<div class="t" style="left:595px;top:502px;font-size:7px;color:#e8e8e8">08:13</div>
<svg class="a" style="left:615px;top:500px" width="11" height="10" viewBox="0 0 11 10"><rect x="0" y="0" width="11" height="6.5" rx="1" fill="#c8c8c0"/><rect x="1" y="1" width="9" height="4.5" fill="#a8a8a0"/><path d="M4.5,6.5 L6.5,6.5 L7,8 L4,8 Z" fill="#d0d0c8"/><rect x="2.5" y="8" width="6" height="2" fill="#e8e8e0"/><circle cx="5.5" cy="3.2" r="2" fill="#e0b020"/><rect x="5.1" y="2" width="0.8" height="1.8" fill="#302000"/></svg>
<svg class="a" style="left:628px;top:499px" width="12" height="13" viewBox="0 0 12 13"><rect x="0.5" y="0.5" width="11" height="12" fill="#3c8a26" stroke="#9ad070"/><rect x="2" y="2" width="7" height="9" fill="#dceccc"/><path d="M5,3.5 L7,5 L6,7 L8,9 M6,7 L4,8.5 M7,5 L9,6 M5.5,5 L3.5,5.5" stroke="#3c8a26" stroke-width="1.1" fill="none"/><circle cx="6" cy="3.2" r="0.9" fill="#3c8a26"/></svg>
</body></html>
